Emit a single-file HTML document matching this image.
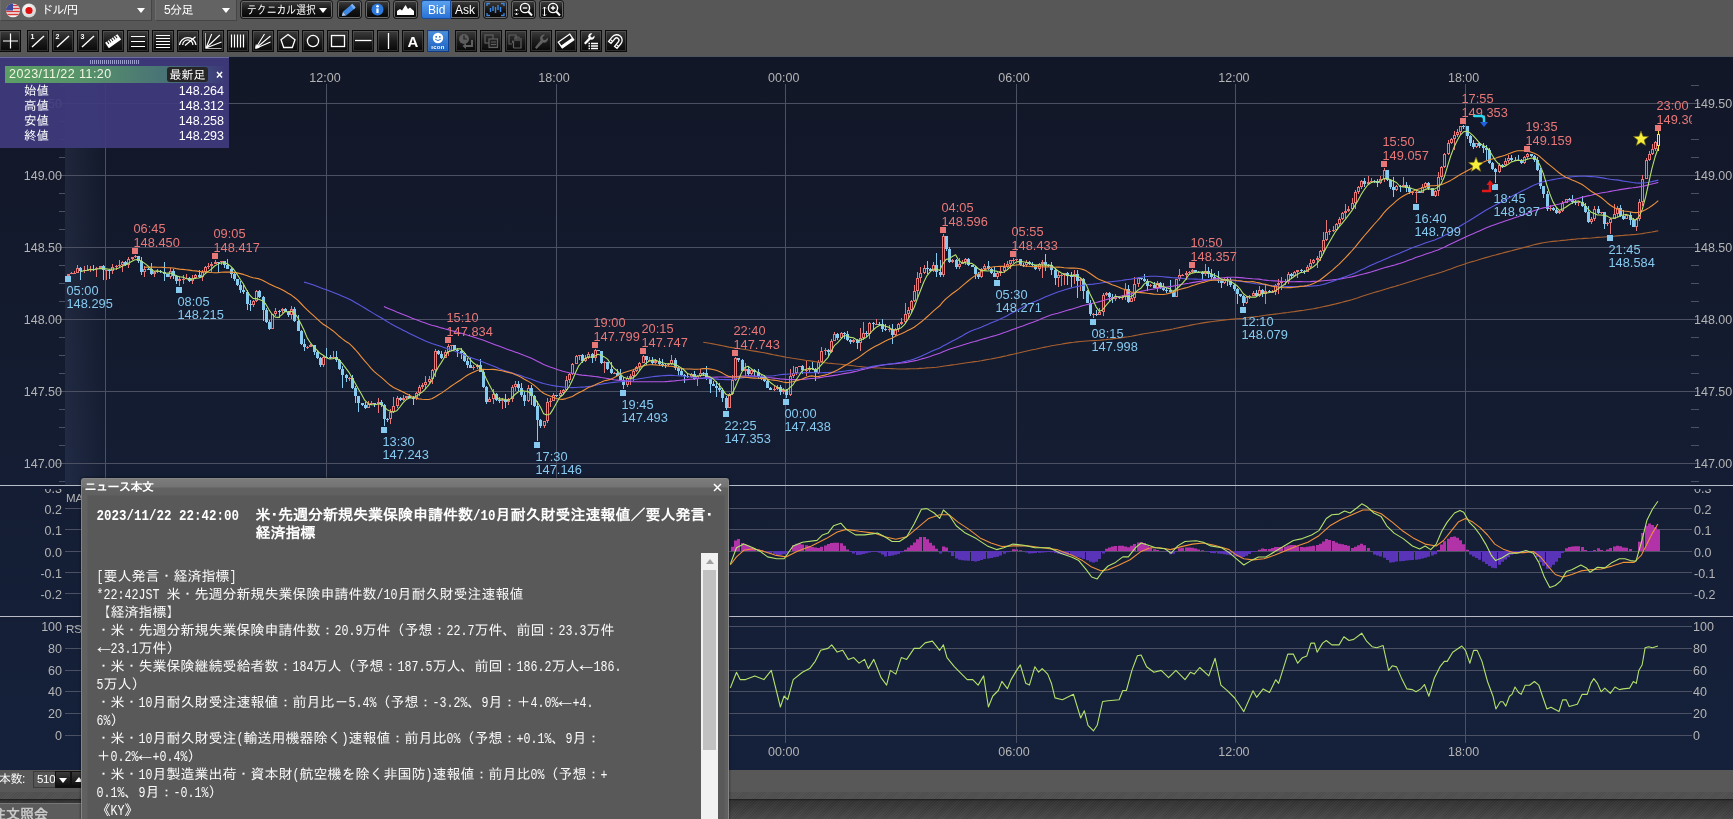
<!DOCTYPE html><html lang="ja"><head><meta charset="utf-8"><title>chart</title><style>
*{box-sizing:border-box;margin:0;padding:0}
html,body{width:1733px;height:819px;overflow:hidden;background:#575757}
body{position:relative;font-family:"Liberation Sans","IPAGothic",sans-serif;color:#fff;font-size:12px}
.abs{position:absolute}
body>*{will-change:transform}
.dd{position:absolute;top:0;height:21px;background:#636363;border-right:1px solid #454545;border-bottom:1px solid #454545;border-left:1px solid #6d6d6d}
.dd span{position:absolute;top:3px;font-size:12px;line-height:15px;white-space:nowrap;letter-spacing:-.6px}
.dd i{position:absolute;right:6px;top:8px;border:4.5px solid transparent;border-top:5px solid #fff;border-bottom:0}
.b1{position:absolute;top:0;height:19px;border:1px solid #1c1c1c;border-radius:3px;background:linear-gradient(#3e3e3e,#141414 55%,#060606);box-shadow:0 0 0 1px #6a6a6a inset}
.b2{position:absolute;top:30px;width:22px;height:22px;border:1px solid #0a0a0a;background:linear-gradient(#3d3d3d,#1c1c1c 50%,#080808);box-shadow:0 0 0 1px rgba(120,120,120,.35) inset}
.b2 svg,.b1 svg{position:absolute;left:0;top:0}
.b2.dis svg{opacity:.42}
.news{position:absolute;left:81px;top:478px;width:648px;height:345px;background:linear-gradient(#7c7c7c 0,#737373 8px,#626262 9px,#606060 17px,#606060 100%);border:1px solid #858585;border-bottom:0;border-radius:3px 3px 0 0;box-shadow:0 0 3px rgba(0,0,0,.6)}
.news .ttl{position:absolute;left:2.5px;top:1px;font-size:12px;line-height:15px;font-weight:bold;font-family:"Liberation Sans","IPAGothic",sans-serif;letter-spacing:-.5px}
.news .body{position:absolute;left:5px;top:16px;width:638px;height:330px;background:#595959;border:1px solid #5c5c5c}
.hd{position:absolute;font:bold 15px/18px "Liberation Mono","IPAGothic",monospace;white-space:pre;color:#fff}
.hd div{height:18px;line-height:18px}
.tx{position:absolute;left:8.5px;top:71.7px;font:14px/18px "Liberation Mono","IPAGothic",monospace;white-space:pre;color:#fafafa}
.tx div{height:18px;line-height:18px;overflow:visible;white-space:pre}
.h{display:inline-block;font-size:11.667px;line-height:12px;height:12px;transform:scaleY(1.22);transform-origin:0 80%;vertical-align:baseline}
.a{display:inline-block;width:14px;font-size:15px;line-height:12px;height:12px;text-align:center;transform:scale(1.45,1.3) translateY(-1px)}
.hd .h{font-size:12.5px;line-height:13px;height:13px}
.info{position:absolute;left:0;top:57px;width:229px;height:91px;background:rgba(63,59,126,.93);border-top:1px solid #6b6ba0}
.info .row{position:absolute;left:0;width:224px;font-size:12.5px;line-height:15px;color:#fff}
.info .row b{font-weight:normal;position:absolute;left:24px;font-family:"Liberation Sans","IPAGothic",sans-serif}
.info .row em{font-style:normal;position:absolute;right:0}
</style></head><body><div class="dd" style="left:0;width:152px"><svg class="abs" style="left:3.5px;top:3px" width="34" height="15" viewBox="0 0 34 15"><defs><radialGradient id="fg" cx=".4" cy=".35" r=".7"><stop offset="0" stop-color="#fff"/><stop offset="1" stop-color="#cfcfcf"/></radialGradient><clipPath id="c1"><circle cx="8" cy="7.5" r="7"/></clipPath></defs><g clip-path="url(#c1)"><rect x="1" y=".5" width="14" height="14" fill="#f4f4f4"/><path d="M1 2.5H15M1 5.5H15M1 8.5H15M1 11.5H15" stroke="#d83838" stroke-width="1.6"/><rect x="1" y=".5" width="7" height="7" fill="#3c4c9c"/></g><circle cx="24" cy="7.5" r="7" fill="url(#fg)"/><circle cx="24" cy="7.5" r="3.6" fill="#e01010"/></svg><span style="left:40px">ドル/円</span><i></i></div><div class="dd" style="left:155px;width:82px"><span style="left:8px">5分足</span><i></i></div><div class="b1" style="left:240px;width:93px;"><span class="abs" style="left:6px;top:1.5px;font-size:12px;line-height:15px;white-space:nowrap;transform:scaleX(.82);transform-origin:0 0">テクニカル選択</span><i class="abs" style="right:5px;top:7px;border:4px solid transparent;border-top:5px solid #fff;border-bottom:0"></i></div><div class="b1" style="left:337px;width:25px;"><svg width="23" height="17" viewBox="0 0 23 17"><g transform="rotate(-40 11.5 8.5)"><rect x="5" y="6" width="12" height="5" fill="#3c88e4"/><path d="M5 6L1.5 8.5L5 11Z" fill="#a8c8f0"/><rect x="15" y="6" width="2.5" height="5" fill="#7ab0f0"/></g></svg></div><div class="b1" style="left:365px;width:25px;"><svg width="23" height="17" viewBox="0 0 23 17"><circle cx="11.5" cy="8.5" r="6" fill="#2c7ae0"/><rect x="10.4" y="7.4" width="2.2" height="4.6" fill="#fff"/><circle cx="11.5" cy="5.2" r="1.3" fill="#fff"/></svg></div><div class="b1" style="left:393px;width:25px;"><svg width="23" height="17" viewBox="0 0 23 17"><path d="M3 14V10L6 8L8 9.5L11.5 4L14 8L16 6.5L20 10V14Z" fill="#fff"/></svg></div><div class="b1" style="left:421px;width:30px;border-radius:3px 0 0 3px;background:linear-gradient(#5aa2ee,#2a72d6);border-color:#184c9c;box-shadow:none"><span class="abs" style="left:6px;top:1px;font-size:12px;line-height:16px">Bid</span></div><div class="b1" style="left:451px;width:29px;border-radius:0 3px 3px 0;border-left:0"><span class="abs" style="left:4px;top:1px;font-size:12px;line-height:16px">Ask</span></div><div class="b1" style="left:483px;width:25px;"><svg width="23" height="17" viewBox="0 0 23 17"><path d="M3 5V2.5H6M17 2.5H20V5M3 12V14.5H6M17 14.5H20V12" stroke="#3c88e4" fill="none" stroke-width="1.3"/><path d="M6.5 7V11M9 5V10M11.5 6V12M14 4V9M16.5 6V11" stroke="#3c88e4" stroke-width="1.4"/></svg></div><div class="b1" style="left:511px;width:25px;"><svg width="23" height="17" viewBox="0 0 23 17"><circle cx="13" cy="7" r="4.6" stroke="#fff" fill="none" stroke-width="1.4"/><path d="M16.3 10.5L20 14.5" stroke="#fff" stroke-width="2"/><path d="M10.8 7H15.2" stroke="#fff" stroke-width="1.3"/><path d="M4.5 8.5V10M4.5 12V13.5M3 9.5L4.5 8L6 9.5M3 12.5L4.5 14L6 12.5" stroke="#fff" fill="none" stroke-width="1"/></svg></div><div class="b1" style="left:539px;width:25px;"><svg width="23" height="17" viewBox="0 0 23 17"><circle cx="13" cy="7" r="4.6" stroke="#fff" fill="none" stroke-width="1.4"/><path d="M16.3 10.5L20 14.5" stroke="#fff" stroke-width="2"/><path d="M10.8 7H15.2M13 4.8V9.2" stroke="#fff" stroke-width="1.3"/><path d="M4.5 6V15M3 7.5L4.5 6L6 7.5M3 13.5L4.5 15L6 13.5" stroke="#fff" fill="none" stroke-width="1"/></svg></div><div class="b2 " style="left:-1px"><svg width="20" height="20" viewBox="0 0 20 20"><path d="M10.5 2.5V17.5M3 10H18" stroke="#fff" fill="none" stroke-width="1.2"/></svg></div><div class="b2 " style="left:27px"><svg width="20" height="20" viewBox="0 0 20 20"><path d="M4 16L16 5" stroke="#fff" fill="none" stroke-width="1.4"/><text x="2.5" y="7.5" font-size="7" font-weight="bold" fill="#fff" font-family="Liberation Sans,sans-serif">1</text></svg></div><div class="b2 " style="left:52px"><svg width="20" height="20" viewBox="0 0 20 20"><path d="M4 16L16 5" stroke="#fff" fill="none" stroke-width="1.4"/><text x="2.5" y="7.5" font-size="7" font-weight="bold" fill="#fff" font-family="Liberation Sans,sans-serif">2</text></svg></div><div class="b2 " style="left:77px"><svg width="20" height="20" viewBox="0 0 20 20"><path d="M4 16L16 5" stroke="#fff" fill="none" stroke-width="1.4"/><text x="2.5" y="7.5" font-size="7" font-weight="bold" fill="#fff" font-family="Liberation Sans,sans-serif">3</text></svg></div><div class="b2 " style="left:102px"><svg width="20" height="20" viewBox="0 0 20 20"><g transform="rotate(-35 10 10)"><rect x="2.5" y="7" width="15" height="6.5" fill="#fff"/><path d="M5 7V10M7.5 7V10M10 7V10M12.5 7V10M15 7V10" stroke="#222" stroke-width="1"/></g></svg></div><div class="b2 " style="left:127px"><svg width="20" height="20" viewBox="0 0 20 20"><path d="M3 5.5H17M3 10.5H17M3 15.5H17" stroke="#fff" fill="none" stroke-width="1.2"/></svg></div><div class="b2 " style="left:152px"><svg width="20" height="20" viewBox="0 0 20 20"><path d="M3 4.5H17M3 7.5H17M3 10.5H17M3 13.5H17M3 16.5H17" stroke="#fff" fill="none" stroke-width="1.2"/></svg></div><div class="b2 " style="left:177px"><svg width="20" height="20" viewBox="0 0 20 20"><path d="M1.5 14A8.3 8.3 0 0 1 18 14M4.7 14A5.1 5.1 0 0 1 14.9 14M7 14.5L17.5 5.8" stroke="#fff" fill="none" stroke-width="1.2"/></svg></div><div class="b2 " style="left:202px"><svg width="20" height="20" viewBox="0 0 20 20"><path d="M2.5 2V17.5H18.5" stroke="#b0b0b0" fill="none" stroke-width="1"/><path d="M3 17L8.7 3M3 17L16.8 4M3 17L18.5 11" stroke="#fff" fill="none" stroke-width="1.1"/></svg></div><div class="b2 " style="left:227px"><svg width="20" height="20" viewBox="0 0 20 20"><path d="M3.5 3.5V16.5M6.5 3.5V16.5M9.5 3.5V16.5M12.5 3.5V16.5M15.5 3.5V16.5" stroke="#fff" fill="none" stroke-width="1.2"/></svg></div><div class="b2 " style="left:252px"><svg width="20" height="20" viewBox="0 0 20 20"><path d="M2.5 17.5L11.5 3M2.5 17.5L17.5 5M2.5 17.5L17.5 11M2.5 17.5l.8-4M2.5 17.5l4-1.2" stroke="#fff" fill="none" stroke-width="1.1"/></svg></div><div class="b2 " style="left:277px"><svg width="20" height="20" viewBox="0 0 20 20"><path d="M10 3.5L17 8.8L14.3 16.5H5.7L3 8.8Z" stroke="#fff" fill="none" stroke-width="1.3"/></svg></div><div class="b2 " style="left:302px"><svg width="20" height="20" viewBox="0 0 20 20"><circle cx="10" cy="10" r="5.6" stroke="#fff" fill="none" stroke-width="1.3"/></svg></div><div class="b2 " style="left:327px"><svg width="20" height="20" viewBox="0 0 20 20"><rect x="3.5" y="4.5" width="13" height="11" stroke="#fff" fill="none" stroke-width="1.3"/></svg></div><div class="b2 " style="left:352px"><svg width="20" height="20" viewBox="0 0 20 20"><path d="M2 9.5H18.5" stroke="#fff" fill="none" stroke-width="1.3"/></svg></div><div class="b2 " style="left:377px"><svg width="20" height="20" viewBox="0 0 20 20"><path d="M10.5 2V18" stroke="#fff" fill="none" stroke-width="1.3"/></svg></div><div class="b2 " style="left:402px"><svg width="20" height="20" viewBox="0 0 20 20"><text x="10" y="16" text-anchor="middle" font-size="15" font-weight="bold" fill="#fff" font-family="Liberation Sans,sans-serif">A</text></svg></div><div class="b2" style="left:427px;background:linear-gradient(#4a90e0,#1c62c2);border-color:#0c3c8c"><svg width="20" height="20" viewBox="0 0 20 20"><circle cx="10" cy="7" r="5.2" fill="#fff"/><circle cx="8.2" cy="5.8" r=".9" fill="#2468c8"/><circle cx="11.8" cy="5.8" r=".9" fill="#2468c8"/><path d="M7.2 8.2Q10 11 12.8 8.2" stroke="#2468c8" fill="none" stroke-width=".9"/><text x="10" y="18.4" text-anchor="middle" font-size="6" font-weight="bold" fill="#fff" font-family="Liberation Sans,sans-serif" letter-spacing=".3">ıcon</text></svg></div><div class="b2 dis2" style="left:455px"><svg width="20" height="20" viewBox="0 0 20 20"><circle cx="8" cy="8" r="5" fill="#5c5c5c"/><path d="M8 4.5V8H11" stroke="#222" fill="none" stroke-width="1.2"/><path d="M16 9V15H9" stroke="#606060" fill="none" stroke-width="2"/><path d="M10 12L6.5 15L10 18Z" fill="#606060"/></svg></div><div class="b2 dis2" style="left:480px"><svg width="20" height="20" viewBox="0 0 20 20"><rect x="4" y="4" width="8" height="8" stroke="#606060" fill="none" stroke-width="1.2"/><rect x="8" y="8" width="8.5" height="8.5" fill="#222" stroke="#606060" stroke-width="1.2"/><path d="M10 11H15M10 13.5H15" stroke="#606060" fill="none" stroke-width="1"/></svg></div><div class="b2 dis2" style="left:505px"><svg width="20" height="20" viewBox="0 0 20 20"><path d="M3 4H10V8M3 4V13H6" stroke="#606060" fill="none" stroke-width="1.1"/><path d="M7.5 17V11L6.5 9.5M9 10V5.5M11 10V5M13 10V5.5M15 11V7M7.5 17H15V11M7.5 12L6 10.5" stroke="#606060" fill="none" stroke-width="1.2"/></svg></div><div class="b2 dis2" style="left:530px"><svg width="20" height="20" viewBox="0 0 20 20"><path d="M4 16.5L5.5 18L12 11.5A4 4 0 0 0 16.8 6.5L14.3 9L12 8.6L11.5 6.2L14 3.7A4 4 0 0 0 9.5 9.5Z" fill="#606060"/></svg></div><div class="b2 " style="left:555px"><svg width="20" height="20" viewBox="0 0 20 20"><g transform="rotate(-35 10 10)"><rect x="3" y="6.5" width="14" height="7" fill="#1c1c1c" stroke="#fff" stroke-width="1.3"/><rect x="3" y="11" width="14" height="2.5" fill="#fff"/></g></svg></div><div class="b2 " style="left:580px"><svg width="20" height="20" viewBox="0 0 20 20"><path d="M3 12L4.5 13.5L9.5 8.5A3.2 3.2 0 0 0 13.5 4.5L11.5 6.5L9.8 6.2L9.4 4.4L11.4 2.4A3.2 3.2 0 0 0 7.6 7Z" fill="#fff"/><path d="M10 12.5H17M10 15H17M10 17.5H17" stroke="#fff" stroke-width="1.3"/><path d="M7.5 12.5H9M7.5 15H9M7.5 17.5H9" stroke="#fff" stroke-width="1.3"/></svg></div><div class="b2 " style="left:605px"><svg width="20" height="20" viewBox="0 0 20 20"><g transform="rotate(40 10 10)"><path d="M4.5 15V9A5.5 5.5 0 0 1 15.5 9V15H12.3V9A2.3 2.3 0 0 0 7.7 9V15Z" fill="none" stroke="#fff" stroke-width="1.3"/><path d="M4.5 12.5H7.7M12.3 12.5H15.5" stroke="#fff" stroke-width="1.2"/></g></svg></div><svg width="1733" height="714" viewBox="0 56 1733 714" style="position:absolute;left:0;top:56px" font-family="Liberation Sans, sans-serif">
<defs><linearGradient id="lg" x1="0" x2="1" y1="0" y2="0"><stop offset="0" stop-color="#8090c0" stop-opacity=".12"/><stop offset="1" stop-color="#8090c0" stop-opacity="0"/></linearGradient><linearGradient id="bgv" x1="0" x2="0" y1="0" y2="1"><stop offset="0" stop-color="#121727"/><stop offset="1" stop-color="#15213b"/></linearGradient></defs>
<rect x="0" y="56" width="1733" height="714" fill="url(#bgv)"/>
<rect x="65" y="57" width="42" height="428" fill="url(#lg)"/>
<rect x="0" y="56" width="1733" height="1" fill="#50545c"/>
<path d="M105.5 84V743M326.5 84V743M556.5 84V743M785.5 84V743M1016.5 84V743M1235.5 84V743M1465.5 84V743M65 103.5H1692M65 175.5H1692M65 247.5H1692M65 319.5H1692M65 391.5H1692M65 463.5H1692M65 508.5H1692M65 529.5H1692M65 551.5H1692M65 572.5H1692M65 593.5H1692M65 626.5H1692M65 648.5H1692M65 670.5H1692M65 691.5H1692M65 713.5H1692M65 735.5H1692" stroke="#4b5162" stroke-width="1" fill="none" shape-rendering="crispEdges"/>
<path d="M0 485.5H1733M0 616.5H1733" stroke="#b8bcc6" stroke-width="1" shape-rendering="crispEdges"/>
<path d="M59 85.5H65M1691 85.5H1699M57 103.5H65M1691 103.5H1699M59 121.5H65M1691 121.5H1699M59 139.5H65M1691 139.5H1699M59 157.5H65M1691 157.5H1699M57 175.5H65M1691 175.5H1699M59 193.5H65M1691 193.5H1699M59 211.5H65M1691 211.5H1699M59 229.5H65M1691 229.5H1699M57 247.5H65M1691 247.5H1699M59 265.5H65M1691 265.5H1699M59 283.5H65M1691 283.5H1699M59 301.5H65M1691 301.5H1699M57 319.5H65M1691 319.5H1699M59 337.5H65M1691 337.5H1699M59 355.5H65M1691 355.5H1699M59 373.5H65M1691 373.5H1699M57 391.5H65M1691 391.5H1699M59 409.5H65M1691 409.5H1699M59 427.5H65M1691 427.5H1699M59 445.5H65M1691 445.5H1699M57 463.5H65M1691 463.5H1699M59 481.5H65M1691 481.5H1699" stroke="#4b5162" stroke-width="1" shape-rendering="crispEdges"/>
<clipPath id="cm"><rect x="0" y="489" width="1733" height="300"/></clipPath>
<g fill="#b4b4b4" font-size="12.5"><text x="62" y="107.7" text-anchor="end">149.50</text><text x="1694" y="107.7">149.50</text><text x="62" y="179.7" text-anchor="end">149.00</text><text x="1694" y="179.7">149.00</text><text x="62" y="251.7" text-anchor="end">148.50</text><text x="1694" y="251.7">148.50</text><text x="62" y="323.7" text-anchor="end">148.00</text><text x="1694" y="323.7">148.00</text><text x="62" y="395.7" text-anchor="end">147.50</text><text x="1694" y="395.7">147.50</text><text x="62" y="467.7" text-anchor="end">147.00</text><text x="1694" y="467.7">147.00</text><text x="62" y="492.9" text-anchor="end" clip-path="url(#cm)">0.3</text><text x="1694" y="492.9" clip-path="url(#cm)">0.3</text><text x="62" y="513.9" text-anchor="end">0.2</text><text x="1694" y="513.9">0.2</text><text x="62" y="534.9" text-anchor="end">0.1</text><text x="1694" y="534.9">0.1</text><text x="62" y="556.9" text-anchor="end">0.0</text><text x="1694" y="556.9">0.0</text><text x="62" y="577.9" text-anchor="end">-0.1</text><text x="1694" y="577.9">-0.1</text><text x="62" y="598.9" text-anchor="end">-0.2</text><text x="1694" y="598.9">-0.2</text><text x="62" y="630.7" text-anchor="end">100</text><text x="1693" y="630.7">100</text><text x="62" y="652.7" text-anchor="end">80</text><text x="1693" y="652.7">80</text><text x="62" y="674.7" text-anchor="end">60</text><text x="1693" y="674.7">60</text><text x="62" y="695.7" text-anchor="end">40</text><text x="1693" y="695.7">40</text><text x="62" y="717.7" text-anchor="end">20</text><text x="1693" y="717.7">20</text><text x="62" y="739.7" text-anchor="end">0</text><text x="1693" y="739.7">0</text><text x="103.5" y="82" text-anchor="middle">06:00</text><text x="103.5" y="756" text-anchor="middle">06:00</text><text x="325.0" y="82" text-anchor="middle">12:00</text><text x="325.0" y="756" text-anchor="middle">12:00</text><text x="554.0" y="82" text-anchor="middle">18:00</text><text x="554.0" y="756" text-anchor="middle">18:00</text><text x="783.7" y="82" text-anchor="middle">00:00</text><text x="783.7" y="756" text-anchor="middle">00:00</text><text x="1014.0" y="82" text-anchor="middle">06:00</text><text x="1014.0" y="756" text-anchor="middle">06:00</text><text x="1233.9" y="82" text-anchor="middle">12:00</text><text x="1233.9" y="756" text-anchor="middle">12:00</text><text x="1463.6" y="82" text-anchor="middle">18:00</text><text x="1463.6" y="756" text-anchor="middle">18:00</text><text x="66" y="502" font-size="11.5">MACD</text><text x="66" y="633" font-size="11.5">RSI</text></g>
<path d="M68.5 274V274M68.5 276V276M71.5 272V273M71.5 274V274M74.5 271V273M74.5 274V273M77.5 265V268M77.5 273V273M84.5 266V270M84.5 271V273M87.5 265V270M87.5 271V271M90.5 266V269M90.5 270V272M96.5 267V268M96.5 269V277M100.5 266V266M100.5 268V269M106.5 270V270M106.5 271V280M112.5 264V267M112.5 271V274M116.5 265V266M116.5 267V270M119.5 260V265M119.5 266V267M122.5 261V262M122.5 265V272M128.5 257V259M128.5 265V268M132.5 257V257M132.5 259V260M135.5 255V256M135.5 257V258M144.5 266V269M144.5 272V277M154.5 271V272M154.5 274V277M157.5 269V271M157.5 272V273M170.5 268V271M170.5 277V279M179.5 276V279M179.5 281V286M183.5 275V279M183.5 280V284M186.5 274V278M186.5 279V279M192.5 275V278M192.5 281V284M195.5 274V275M195.5 278V279M202.5 270V272M202.5 277V281M205.5 266V267M205.5 272V274M208.5 263V266M208.5 267V269M211.5 262V264M211.5 266V272M215.5 260V262M215.5 264V264M221.5 261V261M221.5 262V265M253.5 300V301M253.5 305V307M256.5 290V291M256.5 301V302M272.5 314V314M272.5 329V329M275.5 308V311M275.5 314V316M282.5 308V309M282.5 311V313M291.5 306V309M291.5 315V319M307.5 346V347M307.5 348V349M310.5 344V345M310.5 347V347M323.5 356V357M323.5 365V367M333.5 351V357M333.5 358V359M349.5 377V378M349.5 379V381M368.5 401V404M368.5 408V408M371.5 401V403M371.5 404V405M378.5 398V402M378.5 404V413M390.5 409V412M390.5 419V424M393.5 397V406M393.5 412V413M397.5 396V398M397.5 406V408M403.5 395V398M403.5 400V401M406.5 396V396M406.5 398V399M416.5 392V393M416.5 398V400M419.5 385V387M419.5 393V396M422.5 383V385M422.5 387V389M425.5 376V382M425.5 385V389M429.5 376V379M429.5 382V383M432.5 369V370M432.5 379V384M435.5 349V351M435.5 370V377M445.5 350V352M445.5 358V358M448.5 344V346M448.5 352V356M451.5 345V345M451.5 346V351M473.5 365V367M473.5 368V370M477.5 364V365M477.5 367V369M489.5 397V399M489.5 402V402M493.5 389V394M493.5 399V404M502.5 398V400M502.5 401V409M508.5 398V399M508.5 402V405M512.5 385V387M512.5 399V402M515.5 381V384M515.5 387V391M528.5 385V388M528.5 401V402M544.5 421V421M544.5 426V428M547.5 398V402M547.5 421V423M550.5 398V401M550.5 402V407M553.5 393V395M553.5 401V401M560.5 390V393M560.5 396V397M563.5 389V390M563.5 393V395M566.5 376V380M566.5 390V391M569.5 373V374M569.5 380V383M572.5 363V364M572.5 374V375M576.5 355V356M576.5 364V364M579.5 355V355M579.5 356V360M585.5 355V358M585.5 361V362M588.5 352V354M588.5 358V359M595.5 349V350M595.5 358V361M604.5 361V362M604.5 363V373M614.5 372V373M614.5 374V374M627.5 376V378M627.5 385V387M630.5 374V376M630.5 378V385M633.5 370V371M633.5 376V381M636.5 366V367M636.5 371V372M639.5 362V363M639.5 367V370M643.5 355V356M643.5 363V363M649.5 357V360M649.5 361V361M655.5 359V361M655.5 363V364M668.5 363V364M668.5 365V366M671.5 355V360M671.5 364V365M691.5 373V374M691.5 377V378M697.5 375V376M697.5 379V386M700.5 369V373M700.5 376V377M729.5 393V394M729.5 408V408M732.5 375V380M732.5 394V395M735.5 357V358M735.5 380V381M745.5 363V369M745.5 371V376M751.5 369V370M751.5 374V375M774.5 385V389M774.5 390V391M777.5 385V387M777.5 389V390M783.5 388V390M783.5 392V394M790.5 369V376M790.5 395V396M793.5 366V373M793.5 376V378M796.5 367V367M796.5 373V375M799.5 366V366M799.5 367V367M806.5 361V370M806.5 371V376M809.5 366V368M809.5 370V372M818.5 360V362M818.5 373V374M821.5 347V351M821.5 362V363M825.5 348V350M825.5 351V355M831.5 339V341M831.5 352V353M834.5 332V334M834.5 341V341M841.5 332V333M841.5 338V339M853.5 339V340M853.5 342V343M860.5 328V338M860.5 343V351M863.5 322V333M863.5 338V340M869.5 322V323M869.5 334V339M876.5 319V324M876.5 325V325M889.5 325V329M889.5 330V332M895.5 328V329M895.5 335V336M898.5 323V324M898.5 329V332M901.5 318V322M901.5 324V325M905.5 303V314M905.5 322V323M908.5 307V310M908.5 314V319M911.5 300V301M911.5 310V313M914.5 285V291M914.5 301V302M917.5 272V278M917.5 291V297M920.5 267V273M920.5 278V283M924.5 265V268M924.5 273V274M933.5 262V265M933.5 271V272M943.5 234V236M943.5 275V277M952.5 259V260M952.5 262V263M959.5 258V264M959.5 267V269M962.5 260V262M962.5 264V264M965.5 258V259M965.5 262V265M981.5 268V269M981.5 277V278M984.5 264V266M984.5 269V270M997.5 271V273M997.5 277V279M1000.5 267V271M1000.5 273V276M1004.5 263V267M1004.5 271V273M1007.5 261V264M1007.5 267V268M1010.5 260V260M1010.5 264V269M1013.5 258V260M1013.5 261V263M1016.5 259V259M1016.5 260V261M1026.5 260V262M1026.5 265V267M1039.5 263V264M1039.5 269V271M1042.5 260V262M1042.5 264V278M1058.5 272V275M1058.5 278V287M1061.5 274V275M1061.5 276V286M1064.5 273V273M1064.5 275V285M1074.5 270V274M1074.5 277V284M1080.5 278V279M1080.5 281V291M1093.5 313V314M1093.5 315V318M1099.5 308V312M1099.5 315V315M1103.5 293V295M1103.5 312V316M1106.5 292V293M1106.5 295V296M1115.5 294V297M1115.5 299V301M1122.5 295V297M1122.5 298V300M1125.5 283V289M1125.5 297V300M1131.5 293V298M1131.5 302V302M1134.5 277V284M1134.5 298V301M1138.5 277V278M1138.5 284V287M1150.5 284V285M1150.5 286V287M1157.5 281V283M1157.5 288V292M1176.5 279V279M1176.5 297V297M1179.5 269V275M1179.5 279V281M1182.5 274V275M1182.5 276V275M1186.5 271V273M1186.5 275V280M1189.5 271V272M1189.5 273V274M1192.5 269V270M1192.5 272V273M1205.5 264V271M1205.5 274V276M1224.5 278V279M1224.5 283V284M1246.5 296V297M1246.5 303V304M1249.5 295V296M1249.5 297V299M1253.5 291V293M1253.5 296V296M1259.5 286V290M1259.5 296V297M1265.5 285V291M1265.5 294V304M1272.5 290V292M1272.5 293V293M1275.5 284V285M1275.5 292V295M1278.5 279V283M1278.5 285V294M1281.5 277V281M1281.5 283V290M1285.5 279V281M1285.5 282V285M1288.5 272V274M1288.5 281V284M1294.5 271V272M1294.5 276V276M1297.5 270V270M1297.5 272V278M1307.5 265V267M1307.5 272V272M1310.5 259V263M1310.5 267V268M1313.5 259V260M1313.5 263V264M1317.5 256V258M1317.5 260V268M1320.5 250V251M1320.5 258V261M1323.5 232V240M1323.5 251V254M1326.5 220V232M1326.5 240V241M1329.5 229V231M1329.5 232V235M1333.5 226V230M1333.5 231V232M1336.5 223V224M1336.5 230V231M1339.5 217V219M1339.5 224V226M1342.5 212V213M1342.5 219V220M1345.5 204V211M1345.5 213V218M1348.5 206V209M1348.5 211V212M1352.5 198V203M1352.5 209V210M1355.5 190V192M1355.5 203V209M1358.5 186V187M1358.5 192V194M1361.5 180V181M1361.5 187V189M1368.5 176V182M1368.5 184V185M1371.5 178V181M1371.5 182V183M1380.5 176V179M1380.5 183V184M1384.5 168V170M1384.5 179V182M1396.5 185V186M1396.5 190V191M1403.5 177V185M1403.5 187V187M1412.5 191V192M1412.5 193V195M1416.5 190V192M1416.5 193V203M1422.5 184V187M1422.5 193V193M1425.5 182V183M1425.5 187V188M1435.5 190V191M1435.5 196V197M1438.5 172V177M1438.5 191V196M1441.5 166V167M1441.5 177V180M1444.5 153V154M1444.5 167V168M1448.5 140V143M1448.5 154V155M1451.5 138V139M1451.5 143V144M1454.5 131V135M1454.5 139V150M1457.5 129V132M1457.5 135V137M1460.5 126V126M1460.5 132V135M1476.5 143V143M1476.5 147V148M1499.5 163V165M1499.5 172V173M1505.5 158V161M1505.5 165V166M1508.5 155V158M1508.5 161V163M1524.5 156V157M1524.5 163V164M1527.5 153V154M1527.5 157V159M1550.5 205V208M1550.5 209V211M1559.5 210V211M1559.5 213V214M1562.5 201V203M1562.5 211V212M1566.5 199V199M1566.5 203V203M1578.5 201V202M1578.5 203V206M1591.5 217V219M1591.5 222V224M1594.5 206V209M1594.5 219V221M1601.5 212V212M1601.5 213V214M1607.5 222V223M1607.5 224V226M1610.5 218V219M1610.5 223V234M1614.5 204V214M1614.5 219V219M1617.5 206V208M1617.5 214V217M1626.5 214V215M1626.5 219V219M1636.5 218V219M1636.5 227V231M1639.5 199V202M1639.5 219V221M1642.5 175V179M1642.5 202V206M1646.5 158V160M1646.5 179V179M1649.5 151V154M1649.5 160V161M1652.5 144V149M1652.5 154V155M1655.5 141V142M1655.5 149V151" stroke="#e87878" stroke-width="1" fill="none" shape-rendering="crispEdges"/>
<path d="M67.5 274.5H69.5V275.5H67.5ZM70 273.5H73M73 273.5H76M76.5 268.5H78.5V272.5H76.5ZM83 270.5H86M86 270.5H89M89 269.5H92M95 268.5H98M99.5 266.5H101.5V267.5H99.5ZM105 270.5H108M111.5 267.5H113.5V270.5H111.5ZM115 266.5H118M118 265.5H121M121.5 262.5H123.5V264.5H121.5ZM127.5 259.5H129.5V264.5H127.5ZM131.5 257.5H133.5V258.5H131.5ZM134 256.5H137M143.5 269.5H145.5V271.5H143.5ZM153.5 272.5H155.5V273.5H153.5ZM156 271.5H159M169.5 271.5H171.5V276.5H169.5ZM178.5 279.5H180.5V280.5H178.5ZM182 279.5H185M185 278.5H188M191.5 278.5H193.5V280.5H191.5ZM194.5 275.5H196.5V277.5H194.5ZM201.5 272.5H203.5V276.5H201.5ZM204.5 267.5H206.5V271.5H204.5ZM207 266.5H210M210.5 264.5H212.5V265.5H210.5ZM214.5 262.5H216.5V263.5H214.5ZM220 261.5H223M252.5 301.5H254.5V304.5H252.5ZM255.5 291.5H257.5V300.5H255.5ZM271.5 314.5H273.5V328.5H271.5ZM274.5 311.5H276.5V313.5H274.5ZM281.5 309.5H283.5V310.5H281.5ZM290.5 309.5H292.5V314.5H290.5ZM306 347.5H309M309.5 345.5H311.5V346.5H309.5ZM322.5 357.5H324.5V364.5H322.5ZM332 357.5H335M348 378.5H351M367.5 404.5H369.5V407.5H367.5ZM370 403.5H373M377.5 402.5H379.5V403.5H377.5ZM389.5 412.5H391.5V418.5H389.5ZM392.5 406.5H394.5V411.5H392.5ZM396.5 398.5H398.5V405.5H396.5ZM402.5 398.5H404.5V399.5H402.5ZM405.5 396.5H407.5V397.5H405.5ZM415.5 393.5H417.5V397.5H415.5ZM418.5 387.5H420.5V392.5H418.5ZM421.5 385.5H423.5V386.5H421.5ZM424.5 382.5H426.5V384.5H424.5ZM428.5 379.5H430.5V381.5H428.5ZM431.5 370.5H433.5V378.5H431.5ZM434.5 351.5H436.5V369.5H434.5ZM444.5 352.5H446.5V357.5H444.5ZM447.5 346.5H449.5V351.5H447.5ZM450 345.5H453M472 367.5H475M476.5 365.5H478.5V366.5H476.5ZM488.5 399.5H490.5V401.5H488.5ZM492.5 394.5H494.5V398.5H492.5ZM501 400.5H504M507.5 399.5H509.5V401.5H507.5ZM511.5 387.5H513.5V398.5H511.5ZM514.5 384.5H516.5V386.5H514.5ZM527.5 388.5H529.5V400.5H527.5ZM543.5 421.5H545.5V425.5H543.5ZM546.5 402.5H548.5V420.5H546.5ZM549 401.5H552M552.5 395.5H554.5V400.5H552.5ZM559.5 393.5H561.5V395.5H559.5ZM562.5 390.5H564.5V392.5H562.5ZM565.5 380.5H567.5V389.5H565.5ZM568.5 374.5H570.5V379.5H568.5ZM571.5 364.5H573.5V373.5H571.5ZM575.5 356.5H577.5V363.5H575.5ZM578 355.5H581M584.5 358.5H586.5V360.5H584.5ZM587.5 354.5H589.5V357.5H587.5ZM594.5 350.5H596.5V357.5H594.5ZM603 362.5H606M613 373.5H616M626.5 378.5H628.5V384.5H626.5ZM629.5 376.5H631.5V377.5H629.5ZM632.5 371.5H634.5V375.5H632.5ZM635.5 367.5H637.5V370.5H635.5ZM638.5 363.5H640.5V366.5H638.5ZM642.5 356.5H644.5V362.5H642.5ZM648 360.5H651M654.5 361.5H656.5V362.5H654.5ZM667 364.5H670M670.5 360.5H672.5V363.5H670.5ZM690.5 374.5H692.5V376.5H690.5ZM696.5 376.5H698.5V378.5H696.5ZM699.5 373.5H701.5V375.5H699.5ZM728.5 394.5H730.5V407.5H728.5ZM731.5 380.5H733.5V393.5H731.5ZM734.5 358.5H736.5V379.5H734.5ZM744.5 369.5H746.5V370.5H744.5ZM750.5 370.5H752.5V373.5H750.5ZM773 389.5H776M776.5 387.5H778.5V388.5H776.5ZM782.5 390.5H784.5V391.5H782.5ZM789.5 376.5H791.5V394.5H789.5ZM792.5 373.5H794.5V375.5H792.5ZM795.5 367.5H797.5V372.5H795.5ZM798 366.5H801M805 370.5H808M808.5 368.5H810.5V369.5H808.5ZM817.5 362.5H819.5V372.5H817.5ZM820.5 351.5H822.5V361.5H820.5ZM824 350.5H827M830.5 341.5H832.5V351.5H830.5ZM833.5 334.5H835.5V340.5H833.5ZM840.5 333.5H842.5V337.5H840.5ZM852.5 340.5H854.5V341.5H852.5ZM859.5 338.5H861.5V342.5H859.5ZM862.5 333.5H864.5V337.5H862.5ZM868.5 323.5H870.5V333.5H868.5ZM875 324.5H878M888 329.5H891M894.5 329.5H896.5V334.5H894.5ZM897.5 324.5H899.5V328.5H897.5ZM900.5 322.5H902.5V323.5H900.5ZM904.5 314.5H906.5V321.5H904.5ZM907.5 310.5H909.5V313.5H907.5ZM910.5 301.5H912.5V309.5H910.5ZM913.5 291.5H915.5V300.5H913.5ZM916.5 278.5H918.5V290.5H916.5ZM919.5 273.5H921.5V277.5H919.5ZM923.5 268.5H925.5V272.5H923.5ZM932.5 265.5H934.5V270.5H932.5ZM942.5 236.5H944.5V274.5H942.5ZM951.5 260.5H953.5V261.5H951.5ZM958.5 264.5H960.5V266.5H958.5ZM961.5 262.5H963.5V263.5H961.5ZM964.5 259.5H966.5V261.5H964.5ZM980.5 269.5H982.5V276.5H980.5ZM983.5 266.5H985.5V268.5H983.5ZM996.5 273.5H998.5V276.5H996.5ZM999.5 271.5H1001.5V272.5H999.5ZM1003.5 267.5H1005.5V270.5H1003.5ZM1006.5 264.5H1008.5V266.5H1006.5ZM1009.5 260.5H1011.5V263.5H1009.5ZM1012 260.5H1015M1015 259.5H1018M1025.5 262.5H1027.5V264.5H1025.5ZM1038.5 264.5H1040.5V268.5H1038.5ZM1041.5 262.5H1043.5V263.5H1041.5ZM1057.5 275.5H1059.5V277.5H1057.5ZM1060 275.5H1063M1063.5 273.5H1065.5V274.5H1063.5ZM1073.5 274.5H1075.5V276.5H1073.5ZM1079.5 279.5H1081.5V280.5H1079.5ZM1092 314.5H1095M1098.5 312.5H1100.5V314.5H1098.5ZM1102.5 295.5H1104.5V311.5H1102.5ZM1105.5 293.5H1107.5V294.5H1105.5ZM1114.5 297.5H1116.5V298.5H1114.5ZM1121 297.5H1124M1124.5 289.5H1126.5V296.5H1124.5ZM1130.5 298.5H1132.5V301.5H1130.5ZM1133.5 284.5H1135.5V297.5H1133.5ZM1137.5 278.5H1139.5V283.5H1137.5ZM1149 285.5H1152M1156.5 283.5H1158.5V287.5H1156.5ZM1175.5 279.5H1177.5V296.5H1175.5ZM1178.5 275.5H1180.5V278.5H1178.5ZM1181 275.5H1184M1185.5 273.5H1187.5V274.5H1185.5ZM1188 272.5H1191M1191.5 270.5H1193.5V271.5H1191.5ZM1204.5 271.5H1206.5V273.5H1204.5ZM1223.5 279.5H1225.5V282.5H1223.5ZM1245.5 297.5H1247.5V302.5H1245.5ZM1248 296.5H1251M1252.5 293.5H1254.5V295.5H1252.5ZM1258.5 290.5H1260.5V295.5H1258.5ZM1264.5 291.5H1266.5V293.5H1264.5ZM1271 292.5H1274M1274.5 285.5H1276.5V291.5H1274.5ZM1277.5 283.5H1279.5V284.5H1277.5ZM1280.5 281.5H1282.5V282.5H1280.5ZM1284 281.5H1287M1287.5 274.5H1289.5V280.5H1287.5ZM1293.5 272.5H1295.5V275.5H1293.5ZM1296.5 270.5H1298.5V271.5H1296.5ZM1306.5 267.5H1308.5V271.5H1306.5ZM1309.5 263.5H1311.5V266.5H1309.5ZM1312.5 260.5H1314.5V262.5H1312.5ZM1316.5 258.5H1318.5V259.5H1316.5ZM1319.5 251.5H1321.5V257.5H1319.5ZM1322.5 240.5H1324.5V250.5H1322.5ZM1325.5 232.5H1327.5V239.5H1325.5ZM1328 231.5H1331M1332 230.5H1335M1335.5 224.5H1337.5V229.5H1335.5ZM1338.5 219.5H1340.5V223.5H1338.5ZM1341.5 213.5H1343.5V218.5H1341.5ZM1344.5 211.5H1346.5V212.5H1344.5ZM1347.5 209.5H1349.5V210.5H1347.5ZM1351.5 203.5H1353.5V208.5H1351.5ZM1354.5 192.5H1356.5V202.5H1354.5ZM1357.5 187.5H1359.5V191.5H1357.5ZM1360.5 181.5H1362.5V186.5H1360.5ZM1367.5 182.5H1369.5V183.5H1367.5ZM1370 181.5H1373M1379.5 179.5H1381.5V182.5H1379.5ZM1383.5 170.5H1385.5V178.5H1383.5ZM1395.5 186.5H1397.5V189.5H1395.5ZM1402.5 185.5H1404.5V186.5H1402.5ZM1411 192.5H1414M1415 192.5H1418M1421.5 187.5H1423.5V192.5H1421.5ZM1424.5 183.5H1426.5V186.5H1424.5ZM1434.5 191.5H1436.5V195.5H1434.5ZM1437.5 177.5H1439.5V190.5H1437.5ZM1440.5 167.5H1442.5V176.5H1440.5ZM1443.5 154.5H1445.5V166.5H1443.5ZM1447.5 143.5H1449.5V153.5H1447.5ZM1450.5 139.5H1452.5V142.5H1450.5ZM1453.5 135.5H1455.5V138.5H1453.5ZM1456.5 132.5H1458.5V134.5H1456.5ZM1459.5 126.5H1461.5V131.5H1459.5ZM1475.5 143.5H1477.5V146.5H1475.5ZM1498.5 165.5H1500.5V171.5H1498.5ZM1504.5 161.5H1506.5V164.5H1504.5ZM1507.5 158.5H1509.5V160.5H1507.5ZM1523.5 157.5H1525.5V162.5H1523.5ZM1526.5 154.5H1528.5V156.5H1526.5ZM1549 208.5H1552M1558.5 211.5H1560.5V212.5H1558.5ZM1561.5 203.5H1563.5V210.5H1561.5ZM1565.5 199.5H1567.5V202.5H1565.5ZM1577 202.5H1580M1590.5 219.5H1592.5V221.5H1590.5ZM1593.5 209.5H1595.5V218.5H1593.5ZM1600 212.5H1603M1606 223.5H1609M1609.5 219.5H1611.5V222.5H1609.5ZM1613.5 214.5H1615.5V218.5H1613.5ZM1616.5 208.5H1618.5V213.5H1616.5ZM1625.5 215.5H1627.5V218.5H1625.5ZM1635.5 219.5H1637.5V226.5H1635.5ZM1638.5 202.5H1640.5V218.5H1638.5ZM1641.5 179.5H1643.5V201.5H1641.5ZM1645.5 160.5H1647.5V178.5H1645.5ZM1648.5 154.5H1650.5V159.5H1648.5ZM1651.5 149.5H1653.5V153.5H1651.5ZM1654.5 142.5H1656.5V148.5H1654.5Z" stroke="#e87878" stroke-width="1" fill="none" shape-rendering="crispEdges"/>
<path d="M80.5 267V280M93.5 265V271M103.5 265V280M109.5 269V279M125.5 261V266M138.5 256V263M141.5 257V275M148.5 268V270M151.5 263V275M160.5 270V273M164.5 262V281M167.5 274V277M173.5 269V279M176.5 275V284M189.5 277V282M199.5 270V278M218.5 262V273M224.5 261V268M227.5 259V269M231.5 268V278M234.5 273V281M237.5 279V286M240.5 281V293M243.5 285V294M247.5 290V310M250.5 300V311M259.5 290V298M263.5 296V321M266.5 308V323M269.5 320V330M279.5 310V318M285.5 308V312M288.5 311V317M294.5 307V322M298.5 315V331M301.5 330V345M304.5 339V351M314.5 345V355M317.5 350V359M320.5 357V367M326.5 348V358M330.5 355V359M336.5 351V362M339.5 359V370M342.5 366V388M346.5 374V382M352.5 375V389M355.5 386V403M358.5 396V412M362.5 403V406M365.5 402V409M374.5 403V407M381.5 400V407M384.5 404V426M387.5 418V422M400.5 397V401M409.5 394V398M413.5 396V405M438.5 350V355M441.5 351V359M454.5 345V350M457.5 348V357M461.5 348V359M464.5 352V362M467.5 358V368M470.5 358V368M480.5 359V372M483.5 370V388M486.5 386V404M496.5 393V401M499.5 397V403M505.5 394V408M518.5 381V391M521.5 383V397M524.5 392V406M531.5 385V405M534.5 395V407M537.5 401V441M540.5 419V428M556.5 395V397M582.5 354V363M592.5 353V363M598.5 350V351M601.5 351V364M607.5 362V370M611.5 362V374M617.5 369V376M620.5 369V380M623.5 377V389M646.5 356V365M652.5 357V365M659.5 358V366M662.5 359V367M665.5 363V368M675.5 358V370M678.5 366V375M681.5 368V376M684.5 374V383M687.5 373V378M694.5 371V380M703.5 372V376M706.5 366V380M710.5 377V393M713.5 381V386M716.5 381V397M719.5 383V392M722.5 388V402M726.5 396V410M738.5 358V362M742.5 359V371M748.5 366V376M754.5 369V376M758.5 369V379M761.5 375V380M764.5 375V382M767.5 380V388M770.5 387V390M780.5 385V395M786.5 389V398M802.5 365V374M812.5 362V370M815.5 368V381M828.5 349V356M837.5 333V340M844.5 332V339M847.5 331V341M850.5 339V344M857.5 339V349M866.5 331V337M873.5 322V330M879.5 322V325M882.5 319V332M885.5 324V331M892.5 324V344M927.5 261V274M930.5 268V272M936.5 253V277M940.5 260V277M946.5 236V251M949.5 247V263M956.5 259V269M968.5 258V266M972.5 265V267M975.5 266V279M978.5 272V279M988.5 261V270M991.5 268V274M994.5 267V277M1020.5 259V266M1023.5 263V267M1029.5 261V265M1032.5 262V267M1035.5 265V270M1045.5 254V271M1048.5 264V267M1051.5 262V275M1055.5 268V285M1067.5 272V285M1071.5 272V287M1077.5 270V298M1083.5 278V299M1087.5 290V303M1090.5 300V316M1096.5 310V316M1109.5 292V301M1112.5 294V303M1119.5 296V299M1128.5 285V303M1141.5 278V280M1144.5 274V282M1147.5 279V291M1154.5 282V288M1160.5 282V289M1163.5 283V291M1166.5 288V293M1170.5 280V293M1173.5 291V297M1195.5 270V272M1198.5 271V273M1202.5 271V280M1208.5 267V278M1211.5 269V281M1214.5 273V280M1218.5 271V283M1221.5 279V288M1227.5 278V286M1230.5 278V287M1234.5 284V291M1237.5 288V304M1240.5 294V297M1243.5 295V306M1256.5 290V297M1262.5 289V297M1269.5 290V293M1291.5 273V278M1301.5 269V273M1304.5 270V274M1364.5 178V187M1374.5 180V183M1377.5 179V187M1387.5 170V181M1390.5 180V189M1393.5 177V197M1400.5 185V192M1406.5 182V192M1409.5 185V194M1419.5 191V193M1428.5 182V190M1432.5 188V196M1463.5 125V129M1467.5 126V139M1470.5 135V146M1473.5 140V149M1479.5 142V148M1483.5 143V153M1486.5 145V160M1489.5 148V164M1492.5 162V170M1495.5 168V183M1502.5 164V168M1511.5 155V161M1515.5 157V161M1518.5 155V161M1521.5 159V164M1531.5 154V157M1534.5 155V162M1537.5 157V171M1540.5 168V189M1543.5 186V198M1547.5 191V211M1553.5 207V211M1556.5 208V214M1569.5 198V200M1572.5 195V204M1575.5 200V205M1582.5 196V207M1585.5 203V213M1588.5 206V223M1598.5 206V214M1604.5 212V229M1620.5 205V217M1623.5 210V220M1630.5 212V225M1633.5 218V227" stroke="#86caf0" stroke-width="1" fill="none" shape-rendering="crispEdges"/>
<path d="M79 268H82V271H79ZM92 269H95V270H92ZM102 266H105V270H102ZM108 270H111V271H108ZM124 262H127V265H124ZM137 256H140V261H137ZM140 261H143V272H140ZM147 269H150V270H147ZM150 269H153V274H150ZM159 271H162V272H159ZM163 272H166V274H163ZM166 274H169V277H166ZM172 271H175V276H172ZM175 276H178V281H175ZM188 278H191V281H188ZM198 275H201V277H198ZM217 262H220V263H217ZM223 261H226V265H223ZM226 265H229V269H226ZM230 269H233V274H230ZM233 274H236V279H233ZM236 279H239V285H236ZM239 285H242V290H239ZM242 290H245V292H242ZM246 292H249V304H246ZM249 304H252V305H249ZM258 291H261V297H258ZM262 297H265V310H262ZM265 310H268V322H265ZM268 322H271V329H268ZM278 311H281V312H278ZM284 309H287V312H284ZM287 312H290V315H287ZM293 309H296V321H293ZM297 321H300V331H297ZM300 331H303V344H300ZM303 344H306V347H303ZM313 345H316V352H313ZM316 352H319V358H316ZM319 358H322V365H319ZM325 357H328V358H325ZM329 357H332V358H329ZM335 357H338V360H335ZM338 360H341V369H338ZM341 369H344V375H341ZM345 375H348V378H345ZM351 378H354V388H351ZM354 388H357V396H354ZM357 396H360V403H357ZM361 403H364V405H361ZM364 405H367V408H364ZM373 403H376V404H373ZM380 402H383V405H380ZM383 405H386V419H383ZM386 419H389V420H386ZM399 398H402V400H399ZM408 396H411V398H408ZM412 398H415V399H412ZM437 351H440V354H437ZM440 354H443V358H440ZM453 345H456V350H453ZM456 350H459V351H456ZM460 351H463V353H460ZM463 353H466V361H463ZM466 361H469V365H466ZM469 365H472V368H469ZM479 365H482V372H479ZM482 372H485V387H482ZM485 387H488V402H485ZM495 394H498V400H495ZM498 400H501V401H498ZM504 400H507V402H504ZM517 384H520V388H517ZM520 388H523V395H520ZM523 395H526V401H523ZM530 388H533V396H530ZM533 396H536V406H533ZM536 406H539V420H536ZM539 420H542V426H539ZM555 395H558V396H555ZM581 355H584V361H581ZM591 354H594V358H591ZM597 350H600V351H597ZM600 351H603V363H600ZM606 362H609V369H606ZM610 369H613V373H610ZM616 373H619V376H616ZM619 376H622V380H619ZM622 380H625V385H622ZM645 356H648V360H645ZM651 360H654V363H651ZM658 361H661V364H658ZM661 364H664V365H661ZM664 365H667V366H664ZM674 360H677V368H674ZM677 368H680V371H677ZM680 371H683V375H680ZM683 375H686V376H683ZM686 376H689V377H686ZM693 374H696V379H693ZM702 373H705V374H702ZM705 373H708V378H705ZM709 378H712V384H709ZM712 384H715V386H712ZM715 386H718V388H715ZM718 388H721V390H718ZM721 390H724V398H721ZM725 398H728V408H725ZM737 358H740V360H737ZM741 360H744V371H741ZM747 369H750V374H747ZM753 370H756V372H753ZM757 372H760V377H757ZM760 377H763V378H760ZM763 377H766V381H763ZM766 381H769V388H766ZM769 388H772V390H769ZM779 387H782V392H779ZM785 390H788V395H785ZM801 366H804V370H801ZM811 368H814V369H811ZM814 369H817V373H814ZM827 350H830V352H827ZM836 334H839V338H836ZM843 333H846V334H843ZM846 334H849V340H846ZM849 340H852V342H849ZM856 340H859V343H856ZM865 333H868V334H865ZM872 323H875V324H872ZM878 324H881V325H878ZM881 324H884V329H881ZM884 329H887V330H884ZM891 329H894V335H891ZM926 268H929V269H926ZM929 269H932V271H929ZM935 265H938V272H935ZM939 272H942V275H939ZM945 236H948V249H945ZM948 249H951V262H948ZM955 260H958V267H955ZM967 259H970V265H967ZM971 265H974V267H971ZM974 267H977V274H974ZM977 274H980V277H977ZM987 266H990V269H987ZM990 269H993V273H990ZM993 273H996V277H993ZM1019 259H1022V265H1019ZM1022 265H1025V266H1022ZM1028 262H1031V264H1028ZM1031 264H1034V265H1031ZM1034 265H1037V269H1034ZM1044 262H1047V265H1044ZM1047 265H1050V266H1047ZM1050 265H1053V270H1050ZM1054 270H1057V278H1054ZM1066 273H1069V276H1066ZM1070 276H1073V277H1070ZM1076 274H1079V281H1076ZM1082 279H1085V291H1082ZM1086 291H1089V303H1086ZM1089 303H1092V314H1089ZM1095 314H1098V315H1095ZM1108 293H1111V297H1108ZM1111 297H1114V299H1111ZM1118 297H1121V298H1118ZM1127 289H1130V302H1127ZM1140 278H1143V279H1140ZM1143 279H1146V281H1143ZM1146 281H1149V286H1146ZM1153 285H1156V288H1153ZM1159 283H1162V288H1159ZM1162 288H1165V290H1162ZM1165 290H1168V291H1165ZM1169 290H1172V292H1169ZM1172 292H1175V297H1172ZM1194 270H1197V272H1194ZM1197 272H1200V273H1197ZM1201 272H1204V274H1201ZM1207 271H1210V274H1207ZM1210 274H1213V277H1210ZM1213 277H1216V280H1213ZM1217 280H1220V281H1217ZM1220 280H1223V283H1220ZM1226 279H1229V280H1226ZM1229 280H1232V285H1229ZM1233 285H1236V289H1233ZM1236 289H1239V294H1236ZM1239 294H1242V296H1239ZM1242 296H1245V303H1242ZM1255 293H1258V296H1255ZM1261 290H1264V294H1261ZM1268 291H1271V292H1268ZM1290 274H1293V276H1290ZM1300 270H1303V271H1300ZM1303 271H1306V272H1303ZM1363 181H1366V184H1363ZM1373 181H1376V182H1373ZM1376 181H1379V183H1376ZM1386 170H1389V180H1386ZM1389 180H1392V187H1389ZM1392 187H1395V190H1392ZM1399 186H1402V187H1399ZM1405 185H1408V188H1405ZM1408 188H1411V192H1408ZM1418 192H1421V193H1418ZM1427 183H1430V188H1427ZM1431 188H1434V196H1431ZM1462 126H1465V127H1462ZM1466 126H1469V136H1466ZM1469 136H1472V143H1469ZM1472 143H1475V147H1472ZM1478 143H1481V146H1478ZM1482 146H1485V148H1482ZM1485 148H1488V150H1485ZM1488 150H1491V163H1488ZM1491 163H1494V169H1491ZM1494 169H1497V172H1494ZM1501 165H1504V166H1501ZM1510 158H1513V160H1510ZM1514 160H1517V161H1514ZM1517 160H1520V161H1517ZM1520 161H1523V163H1520ZM1530 154H1533V156H1530ZM1533 156H1536V160H1533ZM1536 160H1539V170H1536ZM1539 170H1542V186H1539ZM1542 186H1545V194H1542ZM1546 194H1549V209H1546ZM1552 208H1555V210H1552ZM1555 210H1558V213H1555ZM1568 199H1571V200H1568ZM1571 199H1574V202H1571ZM1574 202H1577V203H1574ZM1581 202H1584V206H1581ZM1584 206H1587V212H1584ZM1587 212H1590V222H1587ZM1597 209H1600V213H1597ZM1603 212H1606V224H1603ZM1619 208H1622V216H1619ZM1622 216H1625V219H1622ZM1629 215H1632V220H1629ZM1632 220H1635V227H1632Z" fill="#86caf0" shape-rendering="crispEdges"/>
<path d="M1658.5 131V134M1658.5 146V151M1657.5 134.5H1659.5V145.5H1657.5Z" stroke="#f4e04a" fill="none" stroke-width="1" shape-rendering="crispEdges"/>
<polyline points="703.3,342.3 706.5,342.8 709.7,343.3 712.9,343.9 716.1,344.5 719.3,345.1 722.5,345.7 725.7,346.4 728.9,347.1 732.1,347.6 735.2,348.1 738.4,348.5 741.6,349.0 744.8,349.5 748.0,350.0 751.2,350.6 754.4,351.1 757.6,351.6 760.8,352.2 764.0,352.8 767.2,353.4 770.4,354.1 773.6,354.8 776.8,355.4 780.0,356.0 783.2,356.6 786.4,357.2 789.5,357.7 792.7,358.3 795.9,358.7 799.1,359.2 802.3,359.7 805.5,360.2 808.7,360.6 811.9,361.1 815.1,361.6 818.3,362.0 821.5,362.3 824.7,362.7 827.9,363.1 831.1,363.4 834.3,363.7 837.5,364.0 840.6,364.3 843.8,364.6 847.0,365.0 850.2,365.4 853.4,365.8 856.6,366.2 859.8,366.5 863.0,366.9 866.2,367.2 869.4,367.5 872.6,367.7 875.8,367.9 879.0,368.0 882.2,368.2 885.4,368.4 888.6,368.5 891.8,368.6 894.9,368.8 898.1,369.0 901.3,369.0 904.5,369.0 907.7,368.9 910.9,368.8 914.1,368.7 917.3,368.6 920.5,368.4 923.7,368.2 926.9,367.9 930.1,367.8 933.3,367.5 936.5,367.2 939.7,366.8 942.9,366.3 946.1,365.8 949.2,365.4 952.4,364.9 955.6,364.5 958.8,364.0 962.0,363.5 965.2,363.0 968.4,362.5 971.6,362.1 974.8,361.6 978.0,361.2 981.2,360.7 984.4,360.1 987.6,359.5 990.8,359.0 994.0,358.4 997.2,357.7 1000.3,357.1 1003.5,356.4 1006.7,355.7 1009.9,354.9 1013.1,354.2 1016.3,353.5 1019.5,352.8 1022.7,352.0 1025.9,351.2 1029.1,350.5 1032.3,349.8 1035.5,349.2 1038.7,348.5 1041.9,347.8 1045.1,347.1 1048.3,346.5 1051.5,345.8 1054.6,345.3 1057.8,344.7 1061.0,344.2 1064.2,343.6 1067.4,343.1 1070.6,342.6 1073.8,342.3 1077.0,341.9 1080.2,341.5 1083.4,341.2 1086.6,341.0 1089.8,340.8 1093.0,340.6 1096.2,340.5 1099.4,340.2 1102.6,339.9 1105.8,339.6 1108.9,339.2 1112.1,338.9 1115.3,338.5 1118.5,338.2 1121.7,337.7 1124.9,337.1 1128.1,336.7 1131.3,336.2 1134.5,335.6 1137.7,335.0 1140.9,334.4 1144.1,333.8 1147.3,333.2 1150.5,332.7 1153.7,332.2 1156.9,331.7 1160.0,331.2 1163.2,330.6 1166.4,330.1 1169.6,329.6 1172.8,329.0 1176.0,328.3 1179.2,327.6 1182.4,326.9 1185.6,326.2 1188.8,325.6 1192.0,324.9 1195.2,324.3 1198.4,323.7 1201.6,323.1 1204.8,322.6 1208.0,322.1 1211.2,321.7 1214.3,321.3 1217.5,320.9 1220.7,320.5 1223.9,320.1 1227.1,319.7 1230.3,319.4 1233.5,319.1 1236.7,318.8 1239.9,318.5 1243.1,318.2 1246.3,317.8 1249.5,317.4 1252.7,317.0 1255.9,316.6 1259.1,316.2 1262.3,315.7 1265.5,315.3 1268.6,314.9 1271.8,314.5 1275.0,314.1 1278.2,313.7 1281.4,313.3 1284.6,312.9 1287.8,312.5 1291.0,312.0 1294.2,311.6 1297.4,311.1 1300.6,310.6 1303.8,310.2 1307.0,309.7 1310.2,309.2 1313.4,308.7 1316.6,308.1 1319.7,307.5 1322.9,306.8 1326.1,306.1 1329.3,305.4 1332.5,304.6 1335.7,303.9 1338.9,303.1 1342.1,302.3 1345.3,301.4 1348.5,300.6 1351.7,299.7 1354.9,298.7 1358.1,297.7 1361.3,296.6 1364.5,295.5 1367.7,294.4 1370.9,293.4 1374.0,292.5 1377.2,291.6 1380.4,290.7 1383.6,289.7 1386.8,288.7 1390.0,287.8 1393.2,286.9 1396.4,285.9 1399.6,285.0 1402.8,284.0 1406.0,283.0 1409.2,282.0 1412.4,281.0 1415.6,280.0 1418.8,279.0 1422.0,278.0 1425.2,277.0 1428.3,276.0 1431.5,275.1 1434.7,274.3 1437.9,273.3 1441.1,272.3 1444.3,271.2 1447.5,270.1 1450.7,269.0 1453.9,267.8 1457.1,266.6 1460.3,265.5 1463.5,264.4 1466.7,263.3 1469.9,262.3 1473.1,261.4 1476.3,260.4 1479.4,259.5 1482.6,258.5 1485.8,257.6 1489.0,256.7 1492.2,255.8 1495.4,255.0 1498.6,254.1 1501.8,253.3 1505.0,252.4 1508.2,251.6 1511.4,250.8 1514.6,249.9 1517.8,249.1 1521.0,248.3 1524.2,247.4 1527.4,246.6 1530.6,245.7 1533.7,244.8 1536.9,244.1 1540.1,243.4 1543.3,242.8 1546.5,242.3 1549.7,241.8 1552.9,241.4 1556.1,241.1 1559.3,240.8 1562.5,240.4 1565.7,240.1 1568.9,239.7 1572.1,239.4 1575.3,239.1 1578.5,238.7 1581.7,238.6 1584.8,238.4 1588.0,238.2 1591.2,238.0 1594.4,237.7 1597.6,237.4 1600.8,237.2 1604.0,237.0 1607.2,236.8 1610.4,236.6 1613.6,236.2 1616.8,235.9 1620.0,235.6 1623.2,235.4 1626.4,235.1 1629.6,234.9 1632.8,234.6 1636.0,234.4 1639.1,234.0 1642.3,233.6 1645.5,233.0 1648.7,232.5 1651.9,232.0 1655.1,231.4 1658.3,230.7" fill="none" stroke="#a8602f" stroke-width="1.1" stroke-linejoin="round"/>
<polyline points="383.9,306.5 387.1,307.9 390.3,309.3 393.5,310.6 396.7,312.0 399.9,313.2 403.1,314.5 406.3,315.8 409.5,317.1 412.7,318.4 415.8,319.6 419.0,320.8 422.2,322.0 425.4,323.1 428.6,324.2 431.8,325.2 435.0,326.0 438.2,326.9 441.4,327.9 444.6,328.8 447.8,329.6 451.0,330.5 454.2,331.4 457.4,332.3 460.6,333.1 463.8,334.1 466.9,335.0 470.1,336.0 473.3,336.9 476.5,337.9 479.7,338.9 482.9,340.0 486.1,341.2 489.3,342.5 492.5,343.7 495.7,344.9 498.9,346.1 502.1,347.3 505.3,348.6 508.5,349.7 511.7,350.8 514.9,351.9 518.1,353.0 521.2,354.2 524.4,355.6 527.6,356.8 530.8,358.1 534.0,359.6 537.2,361.2 540.4,362.8 543.6,364.4 546.8,365.7 550.0,367.0 553.2,368.1 556.4,369.2 559.6,370.3 562.8,371.2 566.0,372.0 569.2,372.7 572.4,373.3 575.5,374.0 578.7,374.6 581.9,375.1 585.1,375.4 588.3,375.7 591.5,376.1 594.7,376.5 597.9,376.9 601.1,377.5 604.3,378.0 607.5,378.5 610.7,379.1 613.9,379.7 617.1,380.1 620.3,380.5 623.5,380.8 626.7,381.2 629.8,381.5 633.0,381.7 636.2,381.8 639.4,381.7 642.6,381.7 645.8,381.8 649.0,381.8 652.2,381.8 655.4,381.8 658.6,381.8 661.8,381.7 665.0,381.6 668.2,381.4 671.4,381.1 674.6,380.9 677.8,380.5 680.9,380.2 684.1,379.9 687.3,379.6 690.5,379.3 693.7,379.1 696.9,378.8 700.1,378.5 703.3,378.1 706.5,377.6 709.7,377.4 712.9,377.2 716.1,377.1 719.3,377.0 722.5,377.0 725.7,377.1 728.9,377.1 732.1,376.9 735.2,376.5 738.4,376.3 741.6,376.1 744.8,376.0 748.0,375.9 751.2,375.9 754.4,376.1 757.6,376.4 760.8,376.6 764.0,376.8 767.2,377.3 770.4,377.7 773.6,378.1 776.8,378.5 780.0,378.9 783.2,379.1 786.4,379.4 789.5,379.5 792.7,379.6 795.9,379.6 799.1,379.5 802.3,379.4 805.5,379.1 808.7,378.8 811.9,378.5 815.1,378.2 818.3,377.9 821.5,377.4 824.7,376.8 827.9,376.4 831.1,375.9 834.3,375.4 837.5,374.9 840.6,374.3 843.8,373.6 847.0,373.1 850.2,372.6 853.4,371.9 856.6,371.2 859.8,370.3 863.0,369.4 866.2,368.7 869.4,367.9 872.6,367.2 875.8,366.5 879.0,365.8 882.2,365.2 885.4,364.7 888.6,364.3 891.8,364.0 894.9,363.7 898.1,363.4 901.3,363.0 904.5,362.6 907.7,362.1 910.9,361.5 914.1,360.9 917.3,360.2 920.5,359.3 923.7,358.4 926.9,357.4 930.1,356.4 933.3,355.3 936.5,354.2 939.7,353.2 942.9,351.7 946.1,350.4 949.2,349.3 952.4,348.2 955.6,347.2 958.8,346.2 962.0,345.2 965.2,344.2 968.4,343.3 971.6,342.3 974.8,341.5 978.0,340.6 981.2,339.6 984.4,338.6 987.6,337.7 990.8,336.8 994.0,335.9 997.2,334.9 1000.3,333.9 1003.5,332.8 1006.7,331.7 1009.9,330.5 1013.1,329.3 1016.3,328.2 1019.5,327.1 1022.7,326.0 1025.9,324.8 1029.1,323.6 1032.3,322.4 1035.5,321.2 1038.7,320.0 1041.9,318.6 1045.1,317.2 1048.3,315.9 1051.5,314.8 1054.6,314.0 1057.8,313.2 1061.0,312.2 1064.2,311.3 1067.4,310.3 1070.6,309.4 1073.8,308.4 1077.0,307.4 1080.2,306.4 1083.4,305.5 1086.6,304.7 1089.8,303.9 1093.0,303.2 1096.2,302.5 1099.4,301.6 1102.6,300.7 1105.8,299.7 1108.9,298.9 1112.1,298.1 1115.3,297.4 1118.5,296.8 1121.7,296.0 1124.9,295.2 1128.1,294.6 1131.3,293.8 1134.5,293.0 1137.7,292.1 1140.9,291.4 1144.1,290.7 1147.3,290.0 1150.5,289.5 1153.7,289.0 1156.9,288.5 1160.0,288.0 1163.2,287.6 1166.4,287.1 1169.6,286.6 1172.8,286.1 1176.0,285.5 1179.2,284.9 1182.4,284.3 1185.6,283.7 1188.8,283.2 1192.0,282.6 1195.2,282.1 1198.4,281.6 1201.6,281.1 1204.8,280.5 1208.0,279.9 1211.2,279.3 1214.3,278.8 1217.5,278.4 1220.7,278.0 1223.9,277.7 1227.1,277.4 1230.3,277.2 1233.5,277.2 1236.7,277.4 1239.9,277.6 1243.1,277.9 1246.3,278.2 1249.5,278.5 1252.7,278.8 1255.9,279.0 1259.1,279.1 1262.3,279.7 1265.5,280.1 1268.6,280.5 1271.8,280.8 1275.0,280.9 1278.2,281.1 1281.4,281.3 1284.6,281.5 1287.8,281.6 1291.0,281.7 1294.2,281.7 1297.4,281.6 1300.6,281.6 1303.8,281.7 1307.0,281.7 1310.2,281.6 1313.4,281.4 1316.6,281.3 1319.7,281.1 1322.9,280.8 1326.1,280.5 1329.3,280.2 1332.5,279.9 1335.7,279.5 1338.9,279.1 1342.1,278.6 1345.3,278.0 1348.5,277.5 1351.7,276.9 1354.9,276.1 1358.1,275.3 1361.3,274.5 1364.5,273.7 1367.7,272.9 1370.9,272.0 1374.0,271.0 1377.2,270.1 1380.4,269.1 1383.6,268.1 1386.8,267.1 1390.0,266.2 1393.2,265.4 1396.4,264.4 1399.6,263.5 1402.8,262.4 1406.0,261.3 1409.2,260.1 1412.4,258.9 1415.6,257.6 1418.8,256.4 1422.0,255.4 1425.2,254.3 1428.3,253.2 1431.5,252.2 1434.7,251.1 1437.9,249.9 1441.1,248.6 1444.3,247.2 1447.5,245.6 1450.7,244.1 1453.9,242.6 1457.1,241.1 1460.3,239.6 1463.5,238.0 1466.7,236.5 1469.9,235.1 1473.1,233.7 1476.3,232.3 1479.4,230.9 1482.6,229.5 1485.8,228.1 1489.0,226.8 1492.2,225.5 1495.4,224.4 1498.6,223.3 1501.8,222.2 1505.0,221.1 1508.2,220.0 1511.4,218.9 1514.6,217.8 1517.8,216.7 1521.0,215.5 1524.2,214.4 1527.4,213.2 1530.6,212.0 1533.7,210.8 1536.9,209.7 1540.1,208.7 1543.3,207.9 1546.5,207.2 1549.7,206.4 1552.9,205.6 1556.1,204.8 1559.3,204.0 1562.5,202.9 1565.7,202.0 1568.9,201.0 1572.1,200.1 1575.3,199.2 1578.5,198.3 1581.7,197.4 1584.8,196.6 1588.0,195.9 1591.2,195.2 1594.4,194.4 1597.6,193.7 1600.8,193.0 1604.0,192.5 1607.2,192.0 1610.4,191.4 1613.6,190.8 1616.8,190.2 1620.0,189.6 1623.2,189.1 1626.4,188.6 1629.6,188.1 1632.8,187.8 1636.0,187.4 1639.1,186.9 1642.3,186.3 1645.5,185.6 1648.7,184.8 1651.9,184.0 1655.1,183.2 1658.3,182.4" fill="none" stroke="#b455e6" stroke-width="1.1" stroke-linejoin="round"/>
<polyline points="304.1,282.1 307.2,283.0 310.4,284.0 313.6,285.0 316.8,286.2 320.0,287.5 323.2,288.7 326.4,289.8 329.6,291.0 332.8,292.2 336.0,293.4 339.2,294.8 342.4,296.2 345.6,297.6 348.8,299.0 352.0,300.6 355.2,302.4 358.4,304.2 361.5,306.1 364.7,308.0 367.9,310.0 371.1,311.9 374.3,313.9 377.5,315.8 380.7,317.5 383.9,319.5 387.1,321.5 390.3,323.4 393.5,325.2 396.7,326.9 399.9,328.6 403.1,330.2 406.3,331.8 409.5,333.5 412.7,335.1 415.8,336.6 419.0,338.1 422.2,339.5 425.4,340.9 428.6,342.2 431.8,343.4 435.0,344.4 438.2,345.4 441.4,346.6 444.6,347.7 447.8,348.8 451.0,349.9 454.2,351.0 457.4,352.2 460.6,353.4 463.8,354.7 466.9,356.0 470.1,357.3 473.3,358.4 476.5,359.5 479.7,360.6 482.9,361.9 486.1,363.2 489.3,364.4 492.5,365.7 495.7,367.1 498.9,368.5 502.1,369.7 505.3,370.8 508.5,371.7 511.7,372.7 514.9,373.7 518.1,374.7 521.2,375.8 524.4,377.0 527.6,378.0 530.8,379.1 534.0,380.3 537.2,381.5 540.4,382.6 543.6,383.5 546.8,384.3 550.0,385.0 553.2,385.6 556.4,386.1 559.6,386.5 562.8,386.9 566.0,387.2 569.2,387.5 572.4,387.6 575.5,387.5 578.7,387.3 581.9,387.1 585.1,386.9 588.3,386.5 591.5,386.1 594.7,385.5 597.9,384.8 601.1,384.2 604.3,383.6 607.5,383.2 610.7,382.8 613.9,382.4 617.1,382.0 620.3,381.7 623.5,381.2 626.7,380.7 629.8,380.2 633.0,379.7 636.2,379.3 639.4,378.8 642.6,378.3 645.8,377.8 649.0,377.3 652.2,376.8 655.4,376.4 658.6,376.1 661.8,375.8 665.0,375.6 668.2,375.4 671.4,375.2 674.6,375.5 677.8,375.7 680.9,375.9 684.1,376.3 687.3,376.7 690.5,377.0 693.7,377.4 696.9,377.8 700.1,378.0 703.3,378.2 706.5,378.4 709.7,378.6 712.9,378.8 716.1,379.1 719.3,379.4 722.5,379.5 725.7,379.6 728.9,379.6 732.1,379.4 735.2,378.8 738.4,378.3 741.6,377.9 744.8,377.4 748.0,377.1 751.2,376.9 754.4,376.7 757.6,376.6 760.8,376.3 764.0,376.0 767.2,376.0 770.4,376.0 773.6,375.7 776.8,375.3 780.0,374.8 783.2,374.4 786.4,374.3 789.5,374.0 792.7,373.7 795.9,373.3 799.1,373.0 802.3,372.7 805.5,372.6 808.7,372.5 811.9,372.6 815.1,372.8 818.3,372.9 821.5,372.8 824.7,372.6 827.9,372.6 831.1,372.4 834.3,372.2 837.5,372.0 840.6,371.6 843.8,371.2 847.0,370.8 850.2,370.4 853.4,370.0 856.6,369.5 859.8,369.0 863.0,368.3 866.2,367.7 869.4,367.0 872.6,366.4 875.8,365.8 879.0,365.3 882.2,364.9 885.4,364.5 888.6,364.1 891.8,363.7 894.9,363.3 898.1,362.8 901.3,362.2 904.5,361.5 907.7,360.8 910.9,360.0 914.1,359.0 917.3,357.7 920.5,356.4 923.7,354.9 926.9,353.5 930.1,352.1 933.3,350.6 936.5,349.2 939.7,347.9 942.9,346.1 946.1,344.4 949.2,342.7 952.4,341.1 955.6,339.5 958.8,337.8 962.0,336.0 965.2,334.0 968.4,332.2 971.6,330.7 974.8,329.6 978.0,328.5 981.2,327.2 984.4,325.8 987.6,324.4 990.8,323.1 994.0,321.8 997.2,320.4 1000.3,319.0 1003.5,317.5 1006.7,315.9 1009.9,314.1 1013.1,312.4 1016.3,310.7 1019.5,309.0 1022.7,307.3 1025.9,305.6 1029.1,304.1 1032.3,302.6 1035.5,301.3 1038.7,300.0 1041.9,298.5 1045.1,297.1 1048.3,295.8 1051.5,294.4 1054.6,293.2 1057.8,292.0 1061.0,291.0 1064.2,290.0 1067.4,289.0 1070.6,288.1 1073.8,287.3 1077.0,286.6 1080.2,285.9 1083.4,285.3 1086.6,284.8 1089.8,284.4 1093.0,284.1 1096.2,283.7 1099.4,283.3 1102.6,282.8 1105.8,282.3 1108.9,281.9 1112.1,281.6 1115.3,281.2 1118.5,280.9 1121.7,280.5 1124.9,279.9 1128.1,279.5 1131.3,279.1 1134.5,278.5 1137.7,277.9 1140.9,277.3 1144.1,276.8 1147.3,276.5 1150.5,276.3 1153.7,276.3 1156.9,276.3 1160.0,276.5 1163.2,276.8 1166.4,277.1 1169.6,277.4 1172.8,277.8 1176.0,277.9 1179.2,277.9 1182.4,278.4 1185.6,278.7 1188.8,278.9 1192.0,279.0 1195.2,279.1 1198.4,279.2 1201.6,279.3 1204.8,279.5 1208.0,279.6 1211.2,279.8 1214.3,279.8 1217.5,279.9 1220.7,280.1 1223.9,280.2 1227.1,280.4 1230.3,280.5 1233.5,280.7 1236.7,281.0 1239.9,281.3 1243.1,281.8 1246.3,282.2 1249.5,282.7 1252.7,283.2 1255.9,283.7 1259.1,284.0 1262.3,284.4 1265.5,284.8 1268.6,285.2 1271.8,285.5 1275.0,285.7 1278.2,286.0 1281.4,286.2 1284.6,286.4 1287.8,286.5 1291.0,286.6 1294.2,286.5 1297.4,286.5 1300.6,286.4 1303.8,286.4 1307.0,286.3 1310.2,286.1 1313.4,285.9 1316.6,285.6 1319.7,285.2 1322.9,284.5 1326.1,283.6 1329.3,282.5 1332.5,281.4 1335.7,280.2 1338.9,278.9 1342.1,277.8 1345.3,276.7 1348.5,275.6 1351.7,274.3 1354.9,272.9 1358.1,271.4 1361.3,269.8 1364.5,268.4 1367.7,266.8 1370.9,265.3 1374.0,263.9 1377.2,262.6 1380.4,261.3 1383.6,259.8 1386.8,258.4 1390.0,257.1 1393.2,255.8 1396.4,254.5 1399.6,253.2 1402.8,251.8 1406.0,250.4 1409.2,249.1 1412.4,247.7 1415.6,246.5 1418.8,245.4 1422.0,244.3 1425.2,243.1 1428.3,241.9 1431.5,240.9 1434.7,239.9 1437.9,238.6 1441.1,237.2 1444.3,235.6 1447.5,233.9 1450.7,232.0 1453.9,230.1 1457.1,228.1 1460.3,226.0 1463.5,224.0 1466.7,222.1 1469.9,220.2 1473.1,218.3 1476.3,216.3 1479.4,214.3 1482.6,212.2 1485.8,210.2 1489.0,208.5 1492.2,206.8 1495.4,205.1 1498.6,203.5 1501.8,201.8 1505.0,200.0 1508.2,198.2 1511.4,196.5 1514.6,194.8 1517.8,193.2 1521.0,191.6 1524.2,190.0 1527.4,188.4 1530.6,186.8 1533.7,185.3 1536.9,184.0 1540.1,182.8 1543.3,181.8 1546.5,181.0 1549.7,180.3 1552.9,179.6 1556.1,179.0 1559.3,178.5 1562.5,178.0 1565.7,177.6 1568.9,177.1 1572.1,176.8 1575.3,176.5 1578.5,176.3 1581.7,176.2 1584.8,176.2 1588.0,176.4 1591.2,176.6 1594.4,176.8 1597.6,177.1 1600.8,177.6 1604.0,178.1 1607.2,178.7 1610.4,179.2 1613.6,179.6 1616.8,179.9 1620.0,180.4 1623.2,181.1 1626.4,181.5 1629.6,182.0 1632.8,182.5 1636.0,182.9 1639.1,183.1 1642.3,183.0 1645.5,182.7 1648.7,182.2 1651.9,181.6 1655.1,180.9 1658.3,180.1" fill="none" stroke="#5b58e0" stroke-width="1.1" stroke-linejoin="round"/>
<polyline points="144.4,267.3 147.6,267.1 150.7,267.1 153.9,267.1 157.1,267.2 160.3,267.3 163.5,267.4 166.7,267.7 169.9,267.8 173.1,268.0 176.3,268.6 179.5,269.1 182.7,269.4 185.9,269.7 189.1,270.1 192.3,270.6 195.5,270.9 198.7,271.4 201.8,271.8 205.0,271.9 208.2,272.2 211.4,272.5 214.6,272.7 217.8,272.7 221.0,272.3 224.2,272.1 227.4,272.1 230.6,272.1 233.8,272.4 237.0,272.9 240.2,273.6 243.4,274.4 246.6,275.4 249.8,276.8 253.0,277.8 256.1,278.2 259.3,278.9 262.5,280.2 265.7,281.9 268.9,283.8 272.1,285.2 275.3,286.7 278.5,288.1 281.7,289.5 284.9,291.3 288.1,293.3 291.3,295.1 294.5,297.5 297.7,300.2 300.9,303.5 304.1,306.8 307.2,309.9 310.4,312.8 313.6,315.7 316.8,318.6 320.0,321.6 323.2,324.2 326.4,326.3 329.6,328.4 332.8,330.7 336.0,333.4 339.2,336.3 342.4,338.9 345.6,341.2 348.8,343.2 352.0,346.1 355.2,349.5 358.4,353.2 361.5,357.1 364.7,360.9 367.9,364.5 371.1,368.3 374.3,371.6 377.5,374.4 380.7,376.9 383.9,379.7 387.1,382.6 390.3,385.3 393.5,387.5 396.7,389.1 399.9,390.5 403.1,392.1 406.3,393.7 409.5,395.3 412.7,396.9 415.8,398.2 419.0,398.9 422.2,399.3 425.4,399.5 428.6,399.5 431.8,398.8 435.0,397.0 438.2,395.0 441.4,393.1 444.6,390.9 447.8,388.6 451.0,386.2 454.2,384.1 457.4,382.0 460.6,380.0 463.8,377.6 466.9,375.5 470.1,373.7 473.3,372.2 476.5,370.8 479.7,369.7 482.9,369.3 486.1,369.5 489.3,369.5 492.5,369.4 495.7,369.6 498.9,370.2 502.1,370.8 505.3,371.6 508.5,372.4 511.7,373.1 514.9,374.4 518.1,375.8 521.2,377.3 524.4,379.2 527.6,380.9 530.8,382.9 534.0,385.2 537.2,387.9 540.4,390.9 543.6,393.3 546.8,394.8 550.0,396.1 553.2,397.2 556.4,398.5 559.6,399.3 562.8,399.4 566.0,398.6 569.2,397.6 572.4,396.4 575.5,394.6 578.7,392.8 581.9,391.2 585.1,389.4 588.3,387.6 591.5,386.5 594.7,385.1 597.9,383.6 601.1,382.3 604.3,380.8 607.5,380.1 610.7,379.2 613.9,377.8 617.1,376.1 620.3,374.2 623.5,372.8 626.7,371.8 629.8,370.8 633.0,369.8 636.2,368.6 639.4,367.4 642.6,366.1 645.8,365.3 649.0,364.8 652.2,364.7 655.4,364.9 658.6,365.2 661.8,365.4 665.0,365.7 668.2,366.1 671.4,366.2 674.6,366.9 677.8,367.7 680.9,368.2 684.1,368.7 687.3,369.0 690.5,369.0 693.7,369.3 696.9,369.3 700.1,369.0 703.3,368.6 706.5,368.6 709.7,368.9 712.9,369.5 716.1,370.3 719.3,371.4 722.5,373.1 725.7,375.0 728.9,376.4 732.1,377.0 735.2,377.0 738.4,376.8 741.6,377.0 744.8,377.1 748.0,377.5 751.2,377.9 754.4,378.1 757.6,378.3 760.8,378.4 764.0,378.6 767.2,379.1 770.4,379.7 773.6,380.1 776.8,380.5 780.0,381.3 783.2,382.0 786.4,382.6 789.5,382.3 792.7,381.8 795.9,381.0 799.1,380.0 802.3,378.9 805.5,377.4 808.7,376.4 811.9,375.9 815.1,376.5 818.3,376.6 821.5,375.8 824.7,375.1 827.9,374.2 831.1,373.1 834.3,371.5 837.5,370.0 840.6,368.2 843.8,366.3 847.0,364.4 850.2,362.5 853.4,360.5 856.6,358.8 859.8,356.6 863.0,354.3 866.2,351.9 869.4,349.8 872.6,347.8 875.8,346.1 879.0,344.4 882.2,342.7 885.4,341.1 888.6,339.6 891.8,338.2 894.9,336.4 898.1,334.9 901.3,333.7 904.5,332.3 907.7,330.6 910.9,329.0 914.1,327.3 917.3,324.9 920.5,322.5 923.7,319.9 926.9,317.0 930.1,314.2 933.3,311.2 936.5,308.4 939.7,305.8 942.9,301.9 946.1,298.6 949.2,296.1 952.4,293.5 955.6,291.3 958.8,288.9 962.0,286.2 965.2,283.4 968.4,280.8 971.6,278.1 974.8,275.9 978.0,274.0 981.2,271.9 984.4,270.0 987.6,268.4 990.8,267.2 994.0,266.7 997.2,266.5 1000.3,266.4 1003.5,266.4 1006.7,266.2 1009.9,265.7 1013.1,265.5 1016.3,265.0 1019.5,264.6 1022.7,265.7 1025.9,266.3 1029.1,266.3 1032.3,266.6 1035.5,266.6 1038.7,266.6 1041.9,266.7 1045.1,266.9 1048.3,266.9 1051.5,267.0 1054.6,267.2 1057.8,267.1 1061.0,267.3 1064.2,267.7 1067.4,268.0 1070.6,268.1 1073.8,268.0 1077.0,268.3 1080.2,268.7 1083.4,269.6 1086.6,271.1 1089.8,273.3 1093.0,275.5 1096.2,277.7 1099.4,279.6 1102.6,280.8 1105.8,282.0 1108.9,283.3 1112.1,284.7 1115.3,285.8 1118.5,287.1 1121.7,288.5 1124.9,289.5 1128.1,290.9 1131.3,292.1 1134.5,292.3 1137.7,292.4 1140.9,292.6 1144.1,292.9 1147.3,293.3 1150.5,293.6 1153.7,294.1 1156.9,294.2 1160.0,294.5 1163.2,294.5 1166.4,294.0 1169.6,293.1 1172.8,292.4 1176.0,291.0 1179.2,289.5 1182.4,288.7 1185.6,287.9 1188.8,286.9 1192.0,285.8 1195.2,284.8 1198.4,283.7 1201.6,282.8 1204.8,282.1 1208.0,281.0 1211.2,280.2 1214.3,280.0 1217.5,280.1 1220.7,280.3 1223.9,280.2 1227.1,279.9 1230.3,280.0 1233.5,280.0 1236.7,280.5 1239.9,280.8 1243.1,281.3 1246.3,281.6 1249.5,281.7 1252.7,281.6 1255.9,282.3 1259.1,282.9 1262.3,283.7 1265.5,284.4 1268.6,285.2 1271.8,286.1 1275.0,286.6 1278.2,287.0 1281.4,287.3 1284.6,287.7 1287.8,287.6 1291.0,287.6 1294.2,287.3 1297.4,286.9 1300.6,286.4 1303.8,286.1 1307.0,285.6 1310.2,284.7 1313.4,283.6 1316.6,282.1 1319.7,280.3 1322.9,277.8 1326.1,275.2 1329.3,272.6 1332.5,270.1 1335.7,267.2 1338.9,264.3 1342.1,261.1 1345.3,257.9 1348.5,254.5 1351.7,251.0 1354.9,247.3 1358.1,243.4 1361.3,239.4 1364.5,235.5 1367.7,231.9 1370.9,228.1 1374.0,224.5 1377.2,221.0 1380.4,217.3 1383.6,213.2 1386.8,209.7 1390.0,206.6 1393.2,203.8 1396.4,200.9 1399.6,198.4 1402.8,196.2 1406.0,194.4 1409.2,192.9 1412.4,191.4 1415.6,190.1 1418.8,189.0 1422.0,188.0 1425.2,186.9 1428.3,186.1 1431.5,185.8 1434.7,185.7 1437.9,185.3 1441.1,184.8 1444.3,183.6 1447.5,182.1 1450.7,180.4 1453.9,178.5 1457.1,176.5 1460.3,174.4 1463.5,172.7 1466.7,170.9 1469.9,169.2 1473.1,167.4 1476.3,165.7 1479.4,164.1 1482.6,162.6 1485.8,161.1 1489.0,159.9 1492.2,159.0 1495.4,158.2 1498.6,157.1 1501.8,156.2 1505.0,155.3 1508.2,154.1 1511.4,152.7 1514.6,151.5 1517.8,150.8 1521.0,150.7 1524.2,150.8 1527.4,151.2 1530.6,151.9 1533.7,152.9 1536.9,154.4 1540.1,156.8 1543.3,159.6 1546.5,162.5 1549.7,165.1 1552.9,167.6 1556.1,170.4 1559.3,173.0 1562.5,175.2 1565.7,177.2 1568.9,178.6 1572.1,180.0 1575.3,181.2 1578.5,182.7 1581.7,184.3 1584.8,186.4 1588.0,188.9 1591.2,191.3 1594.4,193.2 1597.6,195.3 1600.8,197.3 1604.0,199.9 1607.2,202.7 1610.4,205.2 1613.6,207.3 1616.8,208.8 1620.0,210.0 1623.2,211.0 1626.4,211.2 1629.6,211.7 1632.8,212.4 1636.0,212.6 1639.1,212.3 1642.3,211.3 1645.5,209.8 1648.7,207.9 1651.9,205.8 1655.1,203.4 1658.3,200.6" fill="none" stroke="#f0913a" stroke-width="1.1" stroke-linejoin="round"/>
<polyline points="80.5,271.6 83.7,270.8 86.9,270.2 90.1,269.4 93.3,269.7 96.4,269.2 99.6,268.5 102.8,268.6 106.0,268.9 109.2,269.2 112.4,269.1 115.6,269.0 118.8,267.9 122.0,266.3 125.2,265.1 128.4,263.3 131.6,261.5 134.8,259.8 138.0,259.6 141.2,261.1 144.4,263.1 147.6,265.6 150.7,269.0 153.9,271.2 157.1,270.9 160.3,271.5 163.5,272.5 166.7,273.2 169.9,272.9 173.1,273.9 176.3,275.7 179.5,276.7 182.7,277.1 185.9,278.5 189.1,279.6 192.3,279.1 195.5,278.2 198.7,278.0 201.8,276.9 205.0,273.9 208.2,271.4 211.4,269.2 214.6,266.0 217.8,264.1 221.0,262.9 224.2,262.7 227.4,263.7 230.6,266.1 233.8,269.5 237.0,274.2 240.2,279.3 243.4,284.0 246.6,290.0 249.8,295.2 253.0,298.4 256.1,298.6 259.3,299.5 262.5,300.7 265.7,304.0 268.9,309.6 272.1,314.2 275.3,317.1 278.5,317.4 281.7,314.9 284.9,311.5 288.1,311.7 291.3,311.2 294.5,313.1 297.7,317.5 300.9,323.8 304.1,330.3 307.2,337.9 310.4,342.7 313.6,346.9 316.8,349.8 320.0,353.3 323.2,355.3 326.4,357.7 329.6,358.9 332.8,358.7 336.0,357.7 339.2,360.2 342.4,363.6 345.6,367.8 348.8,372.1 352.0,377.7 355.2,383.2 358.4,388.9 361.5,394.3 364.7,400.2 367.9,403.4 371.1,404.8 374.3,404.8 377.5,404.2 380.7,403.6 383.9,406.6 387.1,409.7 390.3,411.3 393.5,412.1 396.7,410.8 399.9,407.0 403.1,402.7 406.3,399.6 409.5,397.9 412.7,397.9 415.8,396.5 419.0,394.4 422.2,392.1 425.4,389.0 428.6,385.1 431.8,380.6 435.0,373.5 438.2,367.3 441.4,362.4 444.6,357.0 447.8,352.1 451.0,350.9 454.2,350.1 457.4,348.8 460.6,348.9 463.8,352.0 466.9,356.0 470.1,359.5 473.3,362.8 476.5,365.1 479.7,367.3 482.9,371.6 486.1,378.5 489.3,384.8 492.5,390.7 495.7,396.2 498.9,399.1 502.1,398.9 505.3,399.5 508.5,400.4 511.7,397.9 514.9,394.5 518.1,392.0 521.2,390.6 524.4,391.1 527.6,391.2 530.8,393.5 534.0,397.0 537.2,402.1 540.4,407.0 543.6,413.7 546.8,415.1 550.0,414.1 553.2,409.1 556.4,403.2 559.6,397.5 562.8,395.0 566.0,390.8 569.2,386.5 572.4,380.1 575.5,372.7 578.7,365.8 581.9,362.0 585.1,358.8 588.3,356.7 591.5,357.2 594.7,356.2 597.9,354.2 601.1,355.2 604.3,356.9 607.5,359.1 610.7,363.7 613.9,368.1 617.1,370.7 620.3,374.2 623.5,377.2 626.7,378.2 629.8,378.8 633.0,377.9 636.2,375.3 639.4,370.9 642.6,366.6 645.8,363.4 649.0,361.3 652.2,360.4 655.4,359.9 658.6,361.5 661.8,362.5 665.0,363.5 668.2,363.8 671.4,363.6 674.6,364.4 677.8,365.7 680.9,367.6 684.1,370.0 687.3,373.4 690.5,374.5 693.7,375.9 696.9,376.2 700.1,375.6 703.3,374.9 706.5,375.8 709.7,376.8 712.9,378.7 716.1,381.8 719.3,385.2 722.5,389.2 725.7,394.1 728.9,395.7 732.1,394.0 735.2,387.6 738.4,380.0 741.6,372.5 744.8,367.5 748.0,366.3 751.2,368.6 754.4,371.0 757.6,372.2 760.8,374.0 764.0,375.4 767.2,379.0 770.4,382.5 773.6,384.9 776.8,386.9 780.0,389.0 783.2,389.5 786.4,390.5 789.5,387.9 792.7,385.2 795.9,380.2 799.1,375.5 802.3,370.6 805.5,369.4 808.7,368.4 811.9,368.8 815.1,370.2 818.3,368.4 821.5,364.6 824.7,361.1 827.9,357.7 831.1,351.2 834.3,345.7 837.5,342.9 840.6,339.4 843.8,335.8 847.0,335.8 850.2,337.4 853.4,337.8 856.6,339.7 859.8,340.5 863.0,339.1 866.2,337.4 869.4,334.1 872.6,330.5 875.8,327.6 879.0,325.8 882.2,324.8 885.4,326.2 888.6,327.1 891.8,329.2 894.9,330.3 898.1,329.3 901.3,327.7 904.5,324.7 907.7,319.7 910.9,314.0 914.1,307.5 917.3,298.7 920.5,290.5 923.7,282.2 926.9,275.8 930.1,271.9 933.3,269.2 936.5,269.0 939.7,270.5 942.9,263.8 946.1,259.4 949.2,258.9 952.4,256.4 955.6,254.8 958.8,260.4 962.0,263.0 965.2,262.4 968.4,263.4 971.6,263.3 974.8,265.4 978.0,268.5 981.2,270.5 984.4,270.6 987.6,271.0 990.8,270.8 994.0,270.7 997.2,271.4 1000.3,272.6 1003.5,272.3 1006.7,270.4 1009.9,267.0 1013.1,264.4 1016.3,261.9 1019.5,261.5 1022.7,261.7 1025.9,262.2 1029.1,263.0 1032.3,264.3 1035.5,265.1 1038.7,264.9 1041.9,264.9 1045.1,265.1 1048.3,265.1 1051.5,265.3 1054.6,268.1 1057.8,270.7 1061.0,272.7 1064.2,274.4 1067.4,275.6 1070.6,275.4 1073.8,275.3 1077.0,276.5 1080.2,277.6 1083.4,280.5 1086.6,285.5 1089.8,293.5 1093.0,300.0 1096.2,307.1 1099.4,311.3 1102.6,309.9 1105.8,305.7 1108.9,302.2 1112.1,299.1 1115.3,296.2 1118.5,296.7 1121.7,297.6 1124.9,296.0 1128.1,296.5 1131.3,296.7 1134.5,293.9 1137.7,290.2 1140.9,288.3 1144.1,284.1 1147.3,281.7 1150.5,281.8 1153.7,283.6 1156.9,284.3 1160.0,285.8 1163.2,286.6 1166.4,287.7 1169.6,288.6 1172.8,291.3 1176.0,289.5 1179.2,286.5 1182.4,283.3 1185.6,279.6 1188.8,274.8 1192.0,273.1 1195.2,272.5 1198.4,272.0 1201.6,272.1 1204.8,271.9 1208.0,272.7 1211.2,273.7 1214.3,275.3 1217.5,276.5 1220.7,278.9 1223.9,279.8 1227.1,280.4 1230.3,281.5 1233.5,283.2 1236.7,285.4 1239.9,288.8 1243.1,293.5 1246.3,295.9 1249.5,297.3 1252.7,297.0 1255.9,297.1 1259.1,294.5 1262.3,293.8 1265.5,292.9 1268.6,292.7 1271.8,291.9 1275.0,290.9 1278.2,288.7 1281.4,286.6 1284.6,284.3 1287.8,280.6 1291.0,278.7 1294.2,276.5 1297.4,274.4 1300.6,272.5 1303.8,272.2 1307.0,270.5 1310.2,268.7 1313.4,266.7 1316.6,264.1 1319.7,259.9 1322.9,254.3 1326.1,248.1 1329.3,242.3 1332.5,236.7 1335.7,231.3 1338.9,227.2 1342.1,223.4 1345.3,219.4 1348.5,215.1 1351.7,210.9 1354.9,205.6 1358.1,200.3 1361.3,194.2 1364.5,189.3 1367.7,185.0 1370.9,182.7 1374.0,181.7 1377.2,182.1 1380.4,181.1 1383.6,178.7 1386.8,178.4 1390.0,179.6 1393.2,181.1 1396.4,182.5 1399.6,186.0 1402.8,187.0 1406.0,187.1 1409.2,187.6 1412.4,188.8 1415.6,189.8 1418.8,191.3 1422.0,191.2 1425.2,189.4 1428.3,188.6 1431.5,189.4 1434.7,189.1 1437.9,187.1 1441.1,183.8 1444.3,176.9 1447.5,166.4 1450.7,156.0 1453.9,147.6 1457.1,140.7 1460.3,135.1 1463.5,131.8 1466.7,131.2 1469.9,132.8 1473.1,135.6 1476.3,139.1 1479.4,142.9 1482.6,145.3 1485.8,146.7 1489.0,150.0 1492.2,155.3 1495.4,160.4 1498.6,163.9 1501.8,166.8 1505.0,166.4 1508.2,164.2 1511.4,161.9 1514.6,161.0 1517.8,160.1 1521.0,160.5 1524.2,160.3 1527.4,159.2 1530.6,158.2 1533.7,158.1 1536.9,159.6 1540.1,165.4 1543.3,173.4 1546.5,184.0 1549.7,193.6 1552.9,201.6 1556.1,207.0 1559.3,210.3 1562.5,209.1 1565.7,207.2 1568.9,205.0 1572.1,202.9 1575.3,201.2 1578.5,201.1 1581.7,202.4 1584.8,205.0 1588.0,209.0 1591.2,212.3 1594.4,213.6 1597.6,215.0 1600.8,215.0 1604.0,215.4 1607.2,216.1 1610.4,218.1 1613.6,218.3 1616.8,217.5 1620.0,215.9 1623.2,215.0 1626.4,214.4 1629.6,215.6 1632.8,219.3 1636.0,220.0 1639.1,216.6 1642.3,209.4 1645.5,197.4 1648.7,182.8 1651.9,168.7 1655.1,156.8 1658.3,147.7" fill="none" stroke="#b4e26a" stroke-width="1.1" stroke-linejoin="round"/>
<rect x="65" y="276" width="6" height="6" fill="#86caf0" shape-rendering="crispEdges"/>
<rect x="132" y="248" width="6" height="6" fill="#e87878" shape-rendering="crispEdges"/>
<rect x="176" y="287" width="6" height="6" fill="#86caf0" shape-rendering="crispEdges"/>
<rect x="212" y="253" width="6" height="6" fill="#e87878" shape-rendering="crispEdges"/>
<rect x="381" y="427" width="6" height="6" fill="#86caf0" shape-rendering="crispEdges"/>
<rect x="445" y="337" width="6" height="6" fill="#e87878" shape-rendering="crispEdges"/>
<rect x="534" y="442" width="6" height="6" fill="#86caf0" shape-rendering="crispEdges"/>
<rect x="592" y="342" width="6" height="6" fill="#e87878" shape-rendering="crispEdges"/>
<rect x="620" y="390" width="6" height="6" fill="#86caf0" shape-rendering="crispEdges"/>
<rect x="640" y="348" width="6" height="6" fill="#e87878" shape-rendering="crispEdges"/>
<rect x="723" y="411" width="6" height="6" fill="#86caf0" shape-rendering="crispEdges"/>
<rect x="732" y="350" width="6" height="6" fill="#e87878" shape-rendering="crispEdges"/>
<rect x="783" y="399" width="6" height="6" fill="#86caf0" shape-rendering="crispEdges"/>
<rect x="940" y="227" width="6" height="6" fill="#e87878" shape-rendering="crispEdges"/>
<rect x="994" y="280" width="6" height="6" fill="#86caf0" shape-rendering="crispEdges"/>
<rect x="1010" y="251" width="6" height="6" fill="#e87878" shape-rendering="crispEdges"/>
<rect x="1090" y="319" width="6" height="6" fill="#86caf0" shape-rendering="crispEdges"/>
<rect x="1189" y="262" width="6" height="6" fill="#e87878" shape-rendering="crispEdges"/>
<rect x="1240" y="307" width="6" height="6" fill="#86caf0" shape-rendering="crispEdges"/>
<rect x="1381" y="161" width="6" height="6" fill="#e87878" shape-rendering="crispEdges"/>
<rect x="1413" y="204" width="6" height="6" fill="#86caf0" shape-rendering="crispEdges"/>
<rect x="1460" y="118" width="6" height="6" fill="#e87878" shape-rendering="crispEdges"/>
<rect x="1492" y="184" width="6" height="6" fill="#86caf0" shape-rendering="crispEdges"/>
<rect x="1524" y="146" width="6" height="6" fill="#e87878" shape-rendering="crispEdges"/>
<rect x="1607" y="235" width="6" height="6" fill="#86caf0" shape-rendering="crispEdges"/>
<rect x="1655" y="125" width="6" height="6" fill="#e87878" shape-rendering="crispEdges"/>
<g font-size="12.8"><text x="66.5" y="294.5" fill="#86caf0">05:00</text><text x="66.5" y="307.5" fill="#86caf0">148.295</text><text x="133.5" y="232.5" fill="#e87878">06:45</text><text x="133.5" y="246.5" fill="#e87878">148.450</text><text x="177.5" y="306.0" fill="#86caf0">08:05</text><text x="177.5" y="319.0" fill="#86caf0">148.215</text><text x="213.5" y="237.5" fill="#e87878">09:05</text><text x="213.5" y="251.5" fill="#e87878">148.417</text><text x="382.5" y="445.5" fill="#86caf0">13:30</text><text x="382.5" y="458.5" fill="#86caf0">147.243</text><text x="446.5" y="321.5" fill="#e87878">15:10</text><text x="446.5" y="335.5" fill="#e87878">147.834</text><text x="535.5" y="460.5" fill="#86caf0">17:30</text><text x="535.5" y="473.5" fill="#86caf0">147.146</text><text x="593.5" y="326.5" fill="#e87878">19:00</text><text x="593.5" y="340.5" fill="#e87878">147.799</text><text x="621.5" y="408.5" fill="#86caf0">19:45</text><text x="621.5" y="421.5" fill="#86caf0">147.493</text><text x="641.5" y="332.5" fill="#e87878">20:15</text><text x="641.5" y="346.5" fill="#e87878">147.747</text><text x="724.5" y="429.5" fill="#86caf0">22:25</text><text x="724.5" y="442.5" fill="#86caf0">147.353</text><text x="733.5" y="334.5" fill="#e87878">22:40</text><text x="733.5" y="348.5" fill="#e87878">147.743</text><text x="784.5" y="417.5" fill="#86caf0">00:00</text><text x="784.5" y="430.5" fill="#86caf0">147.438</text><text x="941.5" y="211.5" fill="#e87878">04:05</text><text x="941.5" y="225.5" fill="#e87878">148.596</text><text x="995.5" y="298.5" fill="#86caf0">05:30</text><text x="995.5" y="311.5" fill="#86caf0">148.271</text><text x="1011.5" y="235.5" fill="#e87878">05:55</text><text x="1011.5" y="249.5" fill="#e87878">148.433</text><text x="1091.5" y="337.5" fill="#86caf0">08:15</text><text x="1091.5" y="350.5" fill="#86caf0">147.998</text><text x="1190.5" y="246.5" fill="#e87878">10:50</text><text x="1190.5" y="260.5" fill="#e87878">148.357</text><text x="1241.5" y="325.5" fill="#86caf0">12:10</text><text x="1241.5" y="338.5" fill="#86caf0">148.079</text><text x="1382.5" y="145.5" fill="#e87878">15:50</text><text x="1382.5" y="159.5" fill="#e87878">149.057</text><text x="1414.5" y="222.5" fill="#86caf0">16:40</text><text x="1414.5" y="235.5" fill="#86caf0">148.799</text><text x="1461.5" y="102.5" fill="#e87878">17:55</text><text x="1461.5" y="116.5" fill="#e87878">149.353</text><text x="1493.5" y="202.5" fill="#86caf0">18:45</text><text x="1493.5" y="215.5" fill="#86caf0">148.937</text><text x="1525.5" y="130.5" fill="#e87878">19:35</text><text x="1525.5" y="144.5" fill="#e87878">149.159</text><text x="1608.5" y="253.5" fill="#86caf0">21:45</text><text x="1608.5" y="266.5" fill="#86caf0">148.584</text><text x="1656.5" y="109.5" fill="#e87878">23:00</text><text x="1656.5" y="123.5" fill="#e87878">149.30</text></g>
<rect x="1692" y="90" width="41" height="40" fill="#121829"/>
<path d="M1692 103.5H1700" stroke="#4b5162"/><text x="1694" y="107.7" fill="#b4b4b4" font-size="12.5">149.50</text>
<path d="M731 546.8H734V551H731ZM734 540.4H737V551H734ZM737 539.0H740V551H737ZM741 542.9H744V551H741ZM744 544.4H747V551H744ZM747 545.7H750V551H747ZM750 547.2H753V551H750ZM753 548.4H756V551H753ZM757 549.2H760V551H757ZM760 550.1H763V551H760ZM792 545.3H795V551H792ZM795 543.8H798V551H795ZM798 543.4H801V551H798ZM801 544.4H804V551H801ZM805 545.3H808V551H805ZM808 546.1H811V551H808ZM811 546.9H814V551H811ZM814 547.5H817V551H814ZM817 548.0H820V551H817ZM820 546.8H823V551H820ZM824 545.4H827V551H824ZM827 544.1H830V551H827ZM830 543.1H833V551H830ZM833 542.7H836V551H833ZM836 542.8H839V551H836ZM840 543.3H843V551H840ZM843 545.8H846V551H843ZM846 549.4H849V551H846ZM904 549.8H907V551H904ZM907 547.4H910V551H907ZM910 545.3H913V551H910ZM913 542.5H916V551H913ZM916 539.3H919V551H916ZM919 537.0H922V551H919ZM923 536.9H926V551H923ZM926 539.3H929V551H926ZM929 542.8H932V551H929ZM932 545.6H935V551H932ZM935 548.7H938V551H935ZM942 546.6H945V551H942ZM945 547.4H948V551H945ZM1012 549.2H1015V551H1012ZM1015 549.6H1018V551H1015ZM1019 550.2H1022V551H1019ZM1105 548.7H1108V551H1105ZM1108 547.4H1111V551H1108ZM1111 546.6H1114V551H1111ZM1114 546.0H1117V551H1114ZM1118 545.7H1121V551H1118ZM1121 545.7H1124V551H1121ZM1124 546.5H1127V551H1124ZM1127 547.3H1130V551H1127ZM1130 545.7H1133V551H1130ZM1133 544.0H1136V551H1133ZM1137 542.6H1140V551H1137ZM1140 542.3H1143V551H1140ZM1143 543.1H1146V551H1143ZM1146 545.5H1149V551H1146ZM1149 548.1H1152V551H1149ZM1153 549.2H1156V551H1153ZM1156 550.1H1159V551H1156ZM1178 548.3H1181V551H1178ZM1181 547.8H1184V551H1181ZM1185 547.4H1188V551H1185ZM1188 547.5H1191V551H1188ZM1191 547.8H1194V551H1191ZM1194 548.4H1197V551H1194ZM1197 549.4H1200V551H1197ZM1201 550.3H1204V551H1201ZM1258 549.7H1261V551H1258ZM1261 548.5H1264V551H1261ZM1264 548.9H1267V551H1264ZM1268 548.9H1271V551H1268ZM1271 547.9H1274V551H1271ZM1274 547.0H1277V551H1274ZM1277 547.0H1280V551H1277ZM1280 547.0H1283V551H1280ZM1284 546.4H1287V551H1284ZM1287 545.5H1290V551H1287ZM1290 544.9H1293V551H1290ZM1293 544.9H1296V551H1293ZM1296 546.3H1299V551H1296ZM1300 547.1H1303V551H1300ZM1303 547.3H1306V551H1303ZM1306 546.8H1309V551H1306ZM1309 546.2H1312V551H1309ZM1312 545.8H1315V551H1312ZM1316 545.0H1319V551H1316ZM1319 543.7H1322V551H1319ZM1322 541.6H1325V551H1322ZM1325 539.0H1328V551H1325ZM1328 540.0H1331V551H1328ZM1332 541.1H1335V551H1332ZM1335 542.6H1338V551H1335ZM1338 543.7H1341V551H1338ZM1341 544.3H1344V551H1341ZM1344 544.9H1347V551H1344ZM1347 545.7H1350V551H1347ZM1351 547.9H1354V551H1351ZM1354 546.7H1357V551H1354ZM1357 545.2H1360V551H1357ZM1360 543.7H1363V551H1360ZM1363 545.2H1366V551H1363ZM1367 548.1H1370V551H1367ZM1437 550.1H1440V551H1437ZM1440 544.4H1443V551H1440ZM1443 541.2H1446V551H1443ZM1447 538.8H1450V551H1447ZM1450 537.1H1453V551H1450ZM1453 536.5H1456V551H1453ZM1456 537.8H1459V551H1456ZM1459 540.3H1462V551H1459ZM1462 544.2H1465V551H1462ZM1466 549.8H1469V551H1466ZM1565 548.2H1568V551H1565ZM1568 547.0H1571V551H1568ZM1571 546.5H1574V551H1571ZM1574 546.3H1577V551H1574ZM1577 546.3H1580V551H1577ZM1581 547.0H1584V551H1581ZM1584 550.0H1587V551H1584ZM1593 549.9H1596V551H1593ZM1597 548.2H1600V551H1597ZM1600 549.9H1603V551H1600ZM1606 549.6H1609V551H1606ZM1609 548.1H1612V551H1609ZM1613 546.4H1616V551H1613ZM1616 545.7H1619V551H1616ZM1619 546.3H1622V551H1619ZM1622 547.4H1625V551H1622ZM1625 547.8H1628V551H1625ZM1629 548.9H1632V551H1629ZM1638 541.7H1641V551H1638ZM1641 532.9H1644V551H1641ZM1645 525.8H1648V551H1645ZM1648 523.5H1651V551H1648ZM1651 525.1H1654V551H1651ZM1654 527.3H1657V551H1654ZM1657 529.6H1660V551H1657Z" fill="#b233a8"/>
<path d="M763 551H766V551.6H763ZM766 551H769V552.7H766ZM769 551H772V553.4H769ZM773 551H776V554.1H773ZM776 551H779V554.9H776ZM779 551H782V555.0H779ZM782 551H785V554.2H782ZM785 551H788V553.2H785ZM849 551H852V551.9H849ZM852 551H855V553.4H852ZM856 551H859V555.0H856ZM859 551H862V554.7H859ZM862 551H865V553.9H862ZM865 551H868V553.2H865ZM868 551H871V552.6H868ZM872 551H875V551.5H872ZM875 551H878V551.7H875ZM878 551H881V552.8H878ZM881 551H884V554.4H881ZM884 551H887V556.4H884ZM888 551H891V555.9H888ZM891 551H894V555.4H891ZM894 551H897V554.7H894ZM897 551H900V553.9H897ZM900 551H903V552.2H900ZM939 551H942V553.5H939ZM948 551H951V552.2H948ZM951 551H954V556.0H951ZM955 551H958V558.4H955ZM958 551H961V559.7H958ZM961 551H964V560.3H961ZM964 551H967V560.6H964ZM967 551H970V560.8H967ZM971 551H974V561.1H971ZM974 551H977V561.4H974ZM977 551H980V561.0H977ZM980 551H983V559.9H980ZM983 551H986V558.9H983ZM987 551H990V558.4H987ZM990 551H993V558.0H990ZM993 551H996V557.3H993ZM996 551H999V556.7H996ZM999 551H1002V555.4H999ZM1003 551H1006V553.7H1003ZM1006 551H1009V552.2H1006ZM1025 551H1028V552.4H1025ZM1028 551H1031V553.4H1028ZM1031 551H1034V553.3H1031ZM1034 551H1037V553.1H1034ZM1038 551H1041V552.8H1038ZM1041 551H1044V552.5H1041ZM1044 551H1047V552.2H1044ZM1047 551H1050V551.8H1047ZM1050 551H1053V552.2H1050ZM1054 551H1057V553.0H1054ZM1057 551H1060V553.7H1057ZM1060 551H1063V554.2H1060ZM1063 551H1066V554.6H1063ZM1066 551H1069V555.0H1066ZM1070 551H1073V555.3H1070ZM1073 551H1076V556.0H1073ZM1076 551H1079V556.9H1076ZM1079 551H1082V557.8H1079ZM1082 551H1085V559.0H1082ZM1086 551H1089V560.3H1086ZM1089 551H1092V561.8H1089ZM1092 551H1095V562.4H1092ZM1095 551H1098V561.8H1095ZM1098 551H1101V558.9H1098ZM1102 551H1105V553.5H1102ZM1165 551H1168V552.0H1165ZM1169 551H1172V554.3H1169ZM1172 551H1175V553.8H1172ZM1207 551H1210V551.9H1207ZM1210 551H1213V552.9H1210ZM1213 551H1216V553.2H1213ZM1217 551H1220V553.5H1217ZM1220 551H1223V553.7H1220ZM1223 551H1226V554.2H1223ZM1226 551H1229V554.7H1226ZM1229 551H1232V555.3H1229ZM1233 551H1236V555.9H1233ZM1236 551H1239V556.5H1236ZM1239 551H1242V556.9H1239ZM1242 551H1245V556.9H1242ZM1245 551H1248V555.8H1245ZM1248 551H1251V554.1H1248ZM1252 551H1255V552.0H1252ZM1373 551H1376V554.4H1373ZM1376 551H1379V555.4H1376ZM1379 551H1382V556.6H1379ZM1383 551H1386V557.8H1383ZM1386 551H1389V559.9H1386ZM1389 551H1392V562.5H1389ZM1392 551H1395V562.2H1392ZM1395 551H1398V561.6H1395ZM1399 551H1402V561.3H1399ZM1402 551H1405V561.0H1402ZM1405 551H1408V560.6H1405ZM1408 551H1411V560.3H1408ZM1411 551H1414V560.0H1411ZM1415 551H1418V559.7H1415ZM1418 551H1421V559.3H1418ZM1421 551H1424V558.6H1421ZM1424 551H1427V557.8H1424ZM1427 551H1430V556.7H1427ZM1431 551H1434V555.6H1431ZM1434 551H1437V554.2H1434ZM1469 551H1472V554.6H1469ZM1472 551H1475V556.4H1472ZM1475 551H1478V558.1H1475ZM1478 551H1481V559.8H1478ZM1482 551H1485V561.8H1482ZM1485 551H1488V564.0H1485ZM1488 551H1491V566.1H1488ZM1491 551H1494V567.7H1491ZM1494 551H1497V568.2H1494ZM1498 551H1501V564.7H1498ZM1501 551H1504V561.8H1501ZM1504 551H1507V559.6H1504ZM1507 551H1510V557.2H1507ZM1510 551H1513V554.7H1510ZM1514 551H1517V554.0H1514ZM1517 551H1520V553.4H1517ZM1520 551H1523V553.0H1520ZM1523 551H1526V552.5H1523ZM1526 551H1529V552.2H1526ZM1530 551H1533V551.9H1530ZM1533 551H1536V553.7H1533ZM1536 551H1539V557.1H1536ZM1539 551H1542V562.0H1539ZM1542 551H1545V565.8H1542ZM1546 551H1549V568.8H1546ZM1549 551H1552V567.5H1549ZM1552 551H1555V564.8H1552ZM1555 551H1558V561.8H1555ZM1558 551H1561V558.1H1558ZM1561 551H1564V553.1H1561ZM1587 551H1590V551.5H1587ZM1590 551H1593V551.8H1590Z" fill="#5a34b8"/>
<polyline points="730.3,565.0 736.5,556.9 743.8,550.3 753.0,548.8 763.9,551.4 774.9,555.1 785.9,556.9 796.9,551.4 811.5,545.9 826.2,538.6 837.2,532.0 846.3,529.4 859.1,531.3 873.8,533.1 884.8,536.8 895.8,539.3 906.7,536.8 917.7,527.6 928.7,518.4 939.7,514.8 948.9,514.8 958.0,522.1 969.0,529.4 980.0,537.9 991.0,543.0 1001.9,546.6 1012.9,545.9 1027.6,545.9 1042.2,547.7 1056.9,549.6 1071.5,555.1 1082.5,560.6 1091.7,567.1 1100.8,570.8 1108.1,569.7 1119.1,565.0 1130.1,559.8 1141.1,551.4 1150.2,547.7 1159.4,547.7 1170.4,549.6 1181.4,546.6 1192.4,544.1 1203.3,543.0 1214.3,545.2 1229.2,549.6 1236.5,555.1 1243.8,558.8 1253.0,559.9 1264.0,558.8 1275.0,555.1 1286.0,550.4 1297.0,546.0 1307.9,542.3 1318.9,535.7 1329.9,525.8 1340.9,519.6 1351.9,514.8 1362.9,510.0 1370.2,510.0 1381.2,513.7 1392.2,522.1 1403.2,531.3 1414.2,538.6 1425.2,544.1 1436.2,546.0 1443.5,540.5 1450.9,531.3 1458.2,522.1 1465.5,518.5 1472.8,522.1 1480.2,527.6 1487.5,535.0 1494.8,544.1 1504.0,549.6 1513.1,552.6 1524.1,552.6 1533.3,551.5 1540.6,557.0 1548.0,566.1 1555.3,574.5 1562.6,577.1 1571.8,574.5 1580.9,570.9 1590.1,569.8 1601.1,569.0 1612.1,566.1 1623.1,562.4 1634.1,562.4 1641.4,555.1 1646.9,544.1 1652.4,533.1 1657.9,524.0" fill="none" stroke="#f0913a" stroke-width="1.1" stroke-linejoin="round"/>
<polyline points="730.3,564.2 736.5,547.7 743.8,544.1 753.0,547.7 760.3,551.4 767.6,556.9 776.8,558.7 784.1,558.7 793.2,545.9 802.4,542.2 817.0,540.4 822.5,534.9 828.0,533.1 833.5,525.8 840.8,523.2 846.3,529.4 855.5,534.9 864.6,534.9 877.5,533.1 884.8,536.8 892.1,541.5 899.4,541.5 906.7,536.8 914.1,523.9 921.4,509.3 926.9,508.6 934.2,513.0 939.7,518.4 943.4,510.0 948.9,514.8 956.2,525.8 965.3,533.1 976.3,538.6 987.3,545.9 996.5,549.6 1003.8,547.7 1012.9,544.1 1023.9,545.2 1034.9,547.7 1049.5,547.7 1060.5,553.2 1071.5,556.9 1078.8,560.6 1086.2,569.7 1091.7,577.0 1097.2,578.9 1102.6,571.5 1108.1,566.0 1115.5,562.4 1122.8,556.9 1128.3,556.9 1135.6,547.7 1141.1,543.0 1148.4,545.2 1155.7,547.7 1164.9,548.8 1171.1,553.2 1177.7,545.9 1185.0,541.5 1196.0,540.8 1203.3,542.2 1210.7,545.9 1221.6,547.7 1229.2,552.6 1236.5,558.8 1243.8,565.0 1251.1,560.6 1258.5,557.0 1265.8,557.0 1275.0,551.5 1284.1,546.0 1293.3,540.5 1302.4,538.6 1311.6,535.0 1318.9,530.6 1326.3,518.5 1331.8,514.8 1339.1,514.1 1344.6,511.1 1350.1,513.0 1357.4,507.5 1361.8,503.8 1366.6,506.4 1373.9,513.0 1381.2,516.6 1386.7,525.8 1394.1,533.1 1403.2,538.6 1412.4,546.0 1419.7,548.9 1425.2,546.0 1430.7,549.6 1436.2,544.1 1441.7,531.3 1447.2,522.1 1454.5,513.0 1460.0,510.4 1463.7,512.2 1469.2,522.1 1474.7,527.6 1480.2,535.0 1485.7,544.1 1491.2,555.1 1495.6,560.6 1502.2,557.7 1509.5,553.3 1516.8,553.3 1526.0,550.4 1533.3,553.3 1538.8,562.4 1544.3,577.1 1549.8,587.4 1555.3,585.5 1560.8,580.8 1566.3,571.6 1571.8,569.8 1580.9,565.0 1586.4,567.9 1590.1,572.3 1597.4,567.2 1604.8,567.9 1612.1,562.4 1619.4,558.8 1624.9,558.8 1630.4,560.6 1635.9,561.3 1641.4,542.3 1646.9,520.3 1652.4,509.3 1657.9,501.3" fill="none" stroke="#b4e26a" stroke-width="1.1" stroke-linejoin="round"/>
<polyline points="730.3,688.0 736.5,672.2 740.1,679.6 745.6,679.6 754.8,675.9 763.9,679.6 771.3,670.4 780.4,707.0 784.1,696.0 787.7,699.7 793.2,679.6 802.4,672.2 809.7,668.6 815.2,661.3 820.7,650.3 828.0,648.4 831.7,644.8 837.2,652.1 842.7,650.3 848.2,659.4 853.7,657.6 859.1,663.1 864.6,659.4 868.3,668.6 873.8,659.4 881.1,677.7 886.6,685.1 890.3,670.4 895.8,674.1 901.3,657.6 906.7,659.4 914.1,648.4 919.6,648.4 925.1,642.9 932.4,641.1 939.7,650.3 943.4,644.8 947.0,657.6 954.3,666.7 961.7,674.1 967.2,679.6 972.7,679.6 978.1,685.1 983.6,675.9 988.4,707.0 992.8,696.0 998.3,690.5 1001.9,681.4 1007.4,688.7 1011.1,679.6 1016.6,670.4 1020.3,664.9 1025.7,683.2 1029.4,685.1 1034.9,666.7 1038.6,672.2 1042.2,668.6 1047.7,674.1 1051.4,683.2 1055.0,697.9 1062.4,699.7 1073.4,694.2 1080.7,718.0 1084.3,710.7 1088.0,725.3 1093.5,730.8 1097.2,725.3 1102.6,701.5 1108.1,700.8 1119.1,699.7 1122.8,690.5 1126.4,690.5 1131.9,670.4 1137.4,655.8 1141.1,655.0 1146.6,666.7 1153.9,672.2 1161.2,670.4 1168.6,677.7 1175.9,670.4 1185.0,679.6 1190.5,672.2 1194.2,674.1 1199.7,667.5 1208.8,675.9 1215.1,658.3 1220.9,685.1 1227.3,690.7 1234.7,698.0 1243.8,711.6 1253.0,690.7 1256.6,697.3 1263.2,688.9 1269.5,692.5 1275.7,679.7 1278.6,683.4 1287.8,654.1 1293.3,654.1 1297.7,663.2 1302.4,657.7 1306.8,655.9 1310.9,643.1 1314.5,643.1 1317.1,652.2 1322.6,643.1 1326.3,640.5 1331.8,644.9 1339.1,644.9 1343.9,636.8 1349.0,640.5 1353.7,639.4 1361.8,633.2 1366.6,641.2 1372.1,646.7 1376.8,647.8 1383.1,645.6 1388.6,670.5 1392.2,665.8 1396.6,666.9 1401.4,677.9 1406.9,688.9 1412.4,689.6 1416.0,691.8 1420.8,688.9 1424.5,684.5 1428.9,696.2 1434.4,677.9 1439.9,666.9 1444.3,661.4 1447.2,661.4 1452.7,652.2 1461.8,646.0 1465.5,650.4 1469.9,663.2 1473.6,650.4 1477.2,650.4 1482.0,661.4 1487.5,681.5 1493.0,696.2 1495.9,709.0 1500.3,701.7 1502.9,701.7 1505.8,706.1 1509.5,696.2 1512.0,694.4 1515.0,687.0 1518.6,692.5 1521.2,694.4 1525.2,685.2 1529.6,685.2 1534.4,681.5 1538.8,685.2 1542.5,696.2 1546.9,709.0 1550.9,707.2 1554.2,709.0 1559.0,711.6 1562.6,699.9 1566.3,699.9 1569.2,706.5 1577.3,704.3 1582.0,694.4 1587.2,694.4 1590.8,683.4 1593.8,678.6 1597.4,683.4 1601.1,691.8 1604.8,688.1 1610.3,693.3 1615.0,687.0 1619.4,689.6 1623.1,688.9 1629.7,688.1 1633.3,681.5 1636.3,683.4 1638.8,670.5 1642.1,665.0 1645.1,647.8 1648.7,646.7 1652.4,647.8 1657.9,646.0" fill="none" stroke="#b4e26a" stroke-width="1.1" stroke-linejoin="round"/>
<polygon points="1476.0,157.0 1478.0,162.3 1483.6,162.5 1479.2,166.0 1480.7,171.5 1476.0,168.4 1471.3,171.5 1472.8,166.0 1468.4,162.5 1474.0,162.3" fill="#f6ee3a" stroke="#6a5a10" stroke-width="0.6"/>
<polygon points="1641.0,131.0 1643.0,136.3 1648.6,136.5 1644.2,140.0 1645.7,145.5 1641.0,142.4 1636.3,145.5 1637.8,140.0 1633.4,136.5 1639.0,136.3" fill="#f6ee3a" stroke="#6a5a10" stroke-width="0.6"/>
<path d="M1474 116H1481Q1484 116 1484 119V122" stroke="#28d8f0" stroke-width="2.4" fill="none"/><path d="M1480 122H1488L1484 127Z" fill="#2060e0"/>
<path d="M1482 191H1490V184" stroke="#e01818" stroke-width="2.6" fill="none"/><path d="M1486.5 185H1494L1490 180Z" fill="#e01818"/>
</svg><div class="info"><svg class="abs" style="left:90px;top:2px" width="50" height="4"><path d="M0.5 0V4M2.5 0V4M4.5 0V4M6.5 0V4M8.5 0V4M10.5 0V4M12.5 0V4M14.5 0V4M16.5 0V4M18.5 0V4M20.5 0V4M22.5 0V4M24.5 0V4M26.5 0V4M28.5 0V4M30.5 0V4M32.5 0V4M34.5 0V4M36.5 0V4M38.5 0V4M40.5 0V4M42.5 0V4M44.5 0V4M46.5 0V4M48.5 0V4" stroke="#9a9acc" stroke-width="1"/></svg><div class="abs" style="left:5px;top:7.5px;width:220px;height:17.5px;opacity:.93;background:linear-gradient(90deg,#5ea664 0,#599a68 35%,#4f8272 60%,#477278 78%,rgba(66,80,125,.7) 92%,rgba(63,59,126,0) 100%)"></div><div class="abs" style="left:9px;top:8px;font-size:12.5px;line-height:16px;color:#f0f6e0;white-space:nowrap;letter-spacing:.45px">2023/11/22 11:20</div><div class="abs" style="left:167px;top:8.5px;width:41px;height:15.5px;background:#262626;border-radius:3px;font-size:12px;line-height:16px;text-align:center;white-space:nowrap;font-family:'Liberation Sans','IPAGothic',sans-serif">最新足</div><div class="abs" style="left:216px;top:9px;font-size:12px;line-height:16px;font-weight:bold">×</div><div class="row" style="top:26px"><b>始値</b><em>148.264</em></div><div class="row" style="top:41px"><b>高値</b><em>148.312</em></div><div class="row" style="top:56px"><b>安値</b><em>148.258</em></div><div class="row" style="top:71px"><b>終値</b><em>148.293</em></div></div><div class="abs" style="left:0;top:770px;width:1733px;height:22px;background:#585858"></div><div class="abs" style="left:0;top:792px;width:1733px;height:27px;background:repeating-linear-gradient(135deg,#3c3c3c 0,#3c3c3c 1px,#484848 1px,#484848 2px)"></div><div class="abs" style="left:0;top:792px;width:1733px;height:27px;background:linear-gradient(rgba(100,100,100,.45) 0,rgba(100,100,100,.45) 6.5px,rgba(30,30,30,.9) 7.5px,rgba(40,40,40,.5) 9px,rgba(90,90,90,.35) 100%)"></div><div class="abs" style="left:0;top:770px;font-size:12px;line-height:16px;letter-spacing:-.5px;white-space:nowrap;font-family:'Liberation Sans','IPAGothic',sans-serif"><span class="abs" style="left:-1px;top:1px">本数:</span></div><div class="abs" style="left:33px;top:771px;width:23px;height:17px;background:#555;border:1px solid #3c3c3c;font-size:11.5px;line-height:15px;padding-left:3px;letter-spacing:-.3px">510</div><div class="abs" style="left:55px;top:771px;width:16px;height:17px;background:linear-gradient(#3a3a3a,#0c0c0c);border:1px solid #111"><i class="abs" style="left:3px;top:6px;border:4px solid transparent;border-top:5px solid #fff;border-bottom:0"></i></div><div class="abs" style="left:71px;top:771px;width:16px;height:17px;background:linear-gradient(#3a3a3a,#0c0c0c);border:1px solid #111"><i class="abs" style="left:3px;top:5px;border:4px solid transparent;border-bottom:5px solid #fff;border-top:0"></i></div><div class="abs" style="left:0;top:803px;width:81px;height:16px;background:#5c5c5c;border-top:1px solid #777"><span class="abs" style="left:-8px;top:2px;font-size:14px;line-height:16px;font-weight:bold;color:#c8c8c8;white-space:nowrap;font-family:'Liberation Sans','IPAGothic',sans-serif">注文照会</span></div><div class="news"><div class="ttl">ニュース本文</div><svg class="abs" style="left:631px;top:4px" width="9" height="9"><path d="M1 1L8 8M8 1L1 8" stroke="#fff" stroke-width="1.5"/></svg><div class="body"><div class="hd" style="left:8.5px;top:12px"><div><span class="h">2023/11/22 22:42:00</span></div></div><div class="hd" style="left:167.5px;top:12px"><div>米･先週分新規失業保険申請件数<span class="h">/10</span>月耐久財受注速報値／要人発言･</div><div>経済指標</div></div><div class="tx"><div><span class="h">[</span>要人発言・経済指標<span class="h">]</span></div><div><span class="h">*22:42JST </span>米・先週分新規失業保険申請件数<span class="h">/10</span>月耐久財受注速報値</div><div>【経済指標】</div><div>・米・先週分新規失業保険申請件数：<span class="h">20.9</span>万件（予想：<span class="h">22.7</span>万件、前回：<span class="h">23.3</span>万件</div><div><span class="a">←</span><span class="h">23.1</span>万件）</div><div>・米・失業保険継続受給者数：<span class="h">184</span>万人（予想：<span class="h">187.5</span>万人、前回：<span class="h">186.2</span>万人<span class="a">←</span><span class="h">186.</span></div><div><span class="h">5</span>万人）</div><div>・米・<span class="h">10</span>月耐久財受注速報値：前月比－<span class="h">5.4%</span>（予想：<span class="h">-3.2%</span>、<span class="h">9</span>月：＋<span class="h">4.0%</span><span class="a">←</span><span class="h">+4.</span></div><div><span class="h">6%</span>）</div><div>・米・<span class="h">10</span>月耐久財受注<span class="h">(</span>輸送用機器除く<span class="h">)</span>速報値：前月比<span class="h">0%</span>（予想：<span class="h">+0.1%</span>、<span class="h">9</span>月：</div><div>＋<span class="h">0.2%</span><span class="a">←</span><span class="h">+0.4%</span>）</div><div>・米・<span class="h">10</span>月製造業出荷・資本財<span class="h">(</span>航空機を除く非国防<span class="h">)</span>速報値：前月比<span class="h">0%</span>（予想：<span class="h">+</span></div><div><span class="h">0.1%</span>、<span class="h">9</span>月：<span class="h">-0.1%</span>）</div><div>《<span class="h">KY</span>》</div></div><div class="abs" style="left:613px;top:57px;width:17px;height:276px;background:#f1f1f1"><div class="abs" style="left:2px;top:17px;width:13px;height:180px;background:#c1c1c1"></div><i class="abs" style="left:4.5px;top:6px;border:4px solid transparent;border-bottom:5px solid #a0a0a0;border-top:0"></i></div></div></div></body></html>
